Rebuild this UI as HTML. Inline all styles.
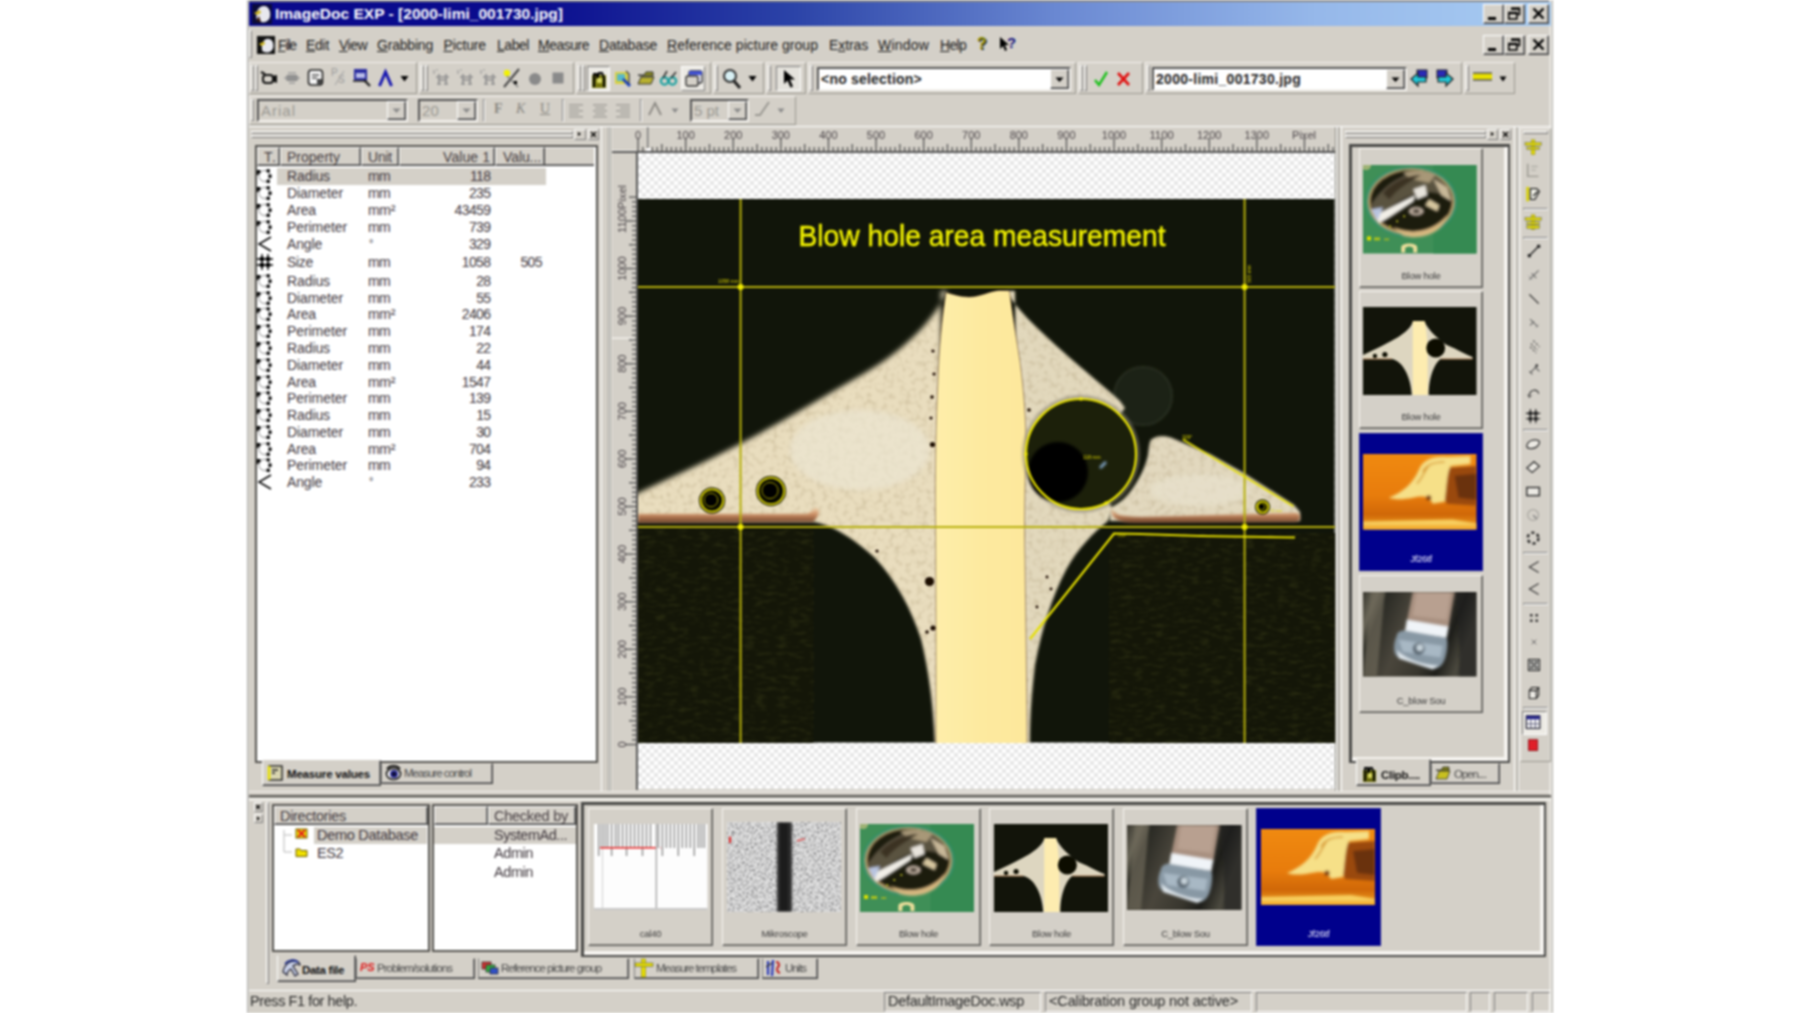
<!DOCTYPE html>
<html lang="en">
<head>
<meta charset="utf-8">
<title>ImageDoc EXP - [2000-limi_001730.jpg]</title>
<style>
*{box-sizing:border-box;margin:0;padding:0}
html,body{width:1800px;height:1013px;overflow:hidden;background:#fff}
body{font-family:"Liberation Sans","DejaVu Sans",sans-serif;font-size:13px;color:#000;position:relative}
.sunk{border:1px solid;border-color:#808080 #fff #fff #808080;box-shadow:inset 1px 1px 0 #404040,inset -1px -1px 0 #d4d0c8}
.sunk2{border:2px solid;border-color:#555 #f4f2ee #f4f2ee #555}
.lst{border:2px solid #55534f}
.rais{border:1px solid;border-color:#fff #404040 #404040 #fff;box-shadow:inset -1px -1px 0 #808080}
.rais1{border:1px solid;border-color:#fff #808080 #808080 #fff}
.sunk1{border:1px solid;border-color:#808080 #fff #fff #808080}
.hdr{background:#d4d0c8;border:1px solid;border-color:#fff #404040 #404040 #fff;box-shadow:inset -1px -1px 0 #808080}
svg{position:absolute;overflow:visible}
#w{position:absolute;left:0;top:0;width:1800px;height:1013px;overflow:hidden;filter:blur(0.8px)}

</style>
</head>
<body>
<div id="w">
<div style="position:absolute;left:247px;top:0px;width:1306px;height:1013px;background:#d4d0c8"></div>
<div style="position:absolute;left:247px;top:0px;width:1306px;height:2px;background:#8a8a8a"></div>
<div style="position:absolute;left:247px;top:0px;width:2px;height:1013px;background:linear-gradient(90deg,#9a9a9a,#e8e6e0)"></div>
<div style="position:absolute;left:1549px;top:0px;width:3px;height:1013px;background:#e4e2dc"></div>
<div style="position:absolute;left:1552px;top:0px;width:1px;height:1013px;background:#b4b2ac"></div>
<div style="position:absolute;left:249px;top:2px;width:1302px;height:24px;background:linear-gradient(90deg,#0a0a8c 0%,#0a0c8e 22%,#2c44a8 42%,#6a88d2 62%,#96b8ea 82%,#a8ccf2 100%)"></div>
<svg style="left:252px;top:4px" width="20" height="20" viewBox="0 0 20 20"><rect width="20" height="20" fill="#0b0b3a"/><path d="M5 16 C3 9 6 2 12 2 C17 2 19 8 18 13 C17 17 13 19 9 18 C7 15 6 13 5 16Z" fill="#e8e8ee"/><path d="M2 9 L8 6 L9 9 L5 11Z" fill="#d0b820"/><path d="M4 17 L7 12 L9 18Z" fill="#3a1a10"/></svg>
<div style="position:absolute;top:4px;font-size:15.5px;line-height:20px;white-space:nowrap;color:#fff;font-family:'Liberation Sans','DejaVu Sans',sans-serif;letter-spacing:0.015px;font-weight:bold;left:275px;">ImageDoc EXP - [2000-limi_001730.jpg]</div>
<div class="rais" style="position:absolute;left:1483px;top:4px;width:21px;height:20px;background:#d4d0c8"></div>
<div style="position:absolute;left:1488px;top:17px;width:8px;height:3px;background:#000"></div>
<div class="rais" style="position:absolute;left:1504px;top:4px;width:21px;height:20px;background:#d4d0c8"></div>
<svg style="left:1507px;top:7px" width="15" height="14" viewBox="0 0 15 14"><path d="M4.5 1.5h8v6h-2" fill="none" stroke="#000" stroke-width="1.6"/><path d="M4 1.7h9" stroke="#000" stroke-width="2.4"/><rect x="1.8" y="6" width="8" height="6" fill="none" stroke="#000" stroke-width="1.6"/><path d="M1 6h9.6" stroke="#000" stroke-width="2.4"/></svg>
<div class="rais" style="position:absolute;left:1528px;top:4px;width:21px;height:20px;background:#d4d0c8"></div>
<svg style="left:1532px;top:7px" width="13" height="13" viewBox="0 0 13 13"><path d="M1.5 1.5L11.5 11.5M11.5 1.5L1.5 11.5" stroke="#000" stroke-width="2.4"/></svg>
<div class="rais" style="position:absolute;left:1483px;top:35px;width:21px;height:20px;background:#d4d0c8"></div>
<div style="position:absolute;left:1488px;top:48px;width:8px;height:3px;background:#000"></div>
<div class="rais" style="position:absolute;left:1504px;top:35px;width:21px;height:20px;background:#d4d0c8"></div>
<svg style="left:1507px;top:38px" width="15" height="14" viewBox="0 0 15 14"><path d="M4.5 1.5h8v6h-2" fill="none" stroke="#000" stroke-width="1.6"/><path d="M4 1.7h9" stroke="#000" stroke-width="2.4"/><rect x="1.8" y="6" width="8" height="6" fill="none" stroke="#000" stroke-width="1.6"/><path d="M1 6h9.6" stroke="#000" stroke-width="2.4"/></svg>
<div class="rais" style="position:absolute;left:1528px;top:35px;width:21px;height:20px;background:#d4d0c8"></div>
<svg style="left:1532px;top:38px" width="13" height="13" viewBox="0 0 13 13"><path d="M1.5 1.5L11.5 11.5M11.5 1.5L1.5 11.5" stroke="#000" stroke-width="2.4"/></svg>
<div class="rais1" style="position:absolute;left:249px;top:30px;width:3px;height:28px;"></div>
<svg style="left:257px;top:36px" width="18" height="18" viewBox="0 0 20 20"><rect width="20" height="20" fill="#111"/><path d="M6 17 C4 10 7 3 12 3 C17 3 19 8 18 13 C17 17 13 19 9 18Z" fill="#e8e8ee"/><path d="M2 9 L8 6 L9 9 L5 11Z" fill="#d0b820"/></svg>
<div style="position:absolute;top:35px;font-size:14px;line-height:20px;white-space:nowrap;color:#1a1a1a;font-family:'Liberation Sans','DejaVu Sans',sans-serif;letter-spacing:-1.140px;left:278px;"><u>F</u>ile</div>
<div style="position:absolute;top:35px;font-size:14px;line-height:20px;white-space:nowrap;color:#1a1a1a;font-family:'Liberation Sans','DejaVu Sans',sans-serif;letter-spacing:-0.281px;left:306px;"><u>E</u>dit</div>
<div style="position:absolute;top:35px;font-size:14px;line-height:20px;white-space:nowrap;color:#1a1a1a;font-family:'Liberation Sans','DejaVu Sans',sans-serif;letter-spacing:-0.523px;left:339px;"><u>V</u>iew</div>
<div style="position:absolute;top:35px;font-size:14px;line-height:20px;white-space:nowrap;color:#1a1a1a;font-family:'Liberation Sans','DejaVu Sans',sans-serif;letter-spacing:-0.199px;left:377px;"><u>G</u>rabbing</div>
<div style="position:absolute;top:35px;font-size:14px;line-height:20px;white-space:nowrap;color:#1a1a1a;font-family:'Liberation Sans','DejaVu Sans',sans-serif;letter-spacing:-0.153px;left:443.5px;"><u>P</u>icture</div>
<div style="position:absolute;top:35px;font-size:14px;line-height:20px;white-space:nowrap;color:#1a1a1a;font-family:'Liberation Sans','DejaVu Sans',sans-serif;letter-spacing:-0.451px;left:497px;"><u>L</u>abel</div>
<div style="position:absolute;top:35px;font-size:14px;line-height:20px;white-space:nowrap;color:#1a1a1a;font-family:'Liberation Sans','DejaVu Sans',sans-serif;letter-spacing:-0.496px;left:538px;"><u>M</u>easure</div>
<div style="position:absolute;top:35px;font-size:14px;line-height:20px;white-space:nowrap;color:#1a1a1a;font-family:'Liberation Sans','DejaVu Sans',sans-serif;letter-spacing:-0.241px;left:599px;"><u>D</u>atabase</div>
<div style="position:absolute;top:35px;font-size:14px;line-height:20px;white-space:nowrap;color:#1a1a1a;font-family:'Liberation Sans','DejaVu Sans',sans-serif;letter-spacing:0.035px;left:667px;"><u>R</u>eference picture group</div>
<div style="position:absolute;top:35px;font-size:14px;line-height:20px;white-space:nowrap;color:#1a1a1a;font-family:'Liberation Sans','DejaVu Sans',sans-serif;letter-spacing:-0.112px;left:829px;">E<u>x</u>tras</div>
<div style="position:absolute;top:35px;font-size:14px;line-height:20px;white-space:nowrap;color:#1a1a1a;font-family:'Liberation Sans','DejaVu Sans',sans-serif;letter-spacing:0.201px;left:878px;"><u>W</u>indow</div>
<div style="position:absolute;top:35px;font-size:14px;line-height:20px;white-space:nowrap;color:#1a1a1a;font-family:'Liberation Sans','DejaVu Sans',sans-serif;letter-spacing:-0.698px;left:940px;"><u>H</u>elp</div>
<div style="position:absolute;top:34px;font-size:16px;line-height:20px;white-space:nowrap;color:#8a8a00;font-family:'Liberation Sans','DejaVu Sans',sans-serif;font-weight:bold;left:977px;text-shadow:1px 1px 0 #222;">?</div>
<svg style="left:999px;top:36px" width="18" height="18" viewBox="0 0 18 18"><path d="M1 1v12l3-3 2 5 2-1-2-5h4z" fill="#000"/></svg>
<div style="position:absolute;top:33px;font-size:15px;line-height:20px;white-space:nowrap;color:#10107a;font-family:'Liberation Sans','DejaVu Sans',sans-serif;font-weight:bold;left:1007px;">?</div>
<div style="position:absolute;left:249px;top:62px;width:168px;height:32px;border:1px solid;border-color:#f4f2ee #9a9890 #9a9890 #f4f2ee"></div>
<div class="rais1" style="position:absolute;left:251px;top:65px;width:3px;height:26px;"></div>
<div class="rais1" style="position:absolute;left:255px;top:65px;width:3px;height:26px;"></div>
<div style="position:absolute;left:419px;top:62px;width:155px;height:32px;border:1px solid;border-color:#f4f2ee #9a9890 #9a9890 #f4f2ee"></div>
<div class="rais1" style="position:absolute;left:421px;top:65px;width:3px;height:26px;"></div>
<div class="rais1" style="position:absolute;left:425px;top:65px;width:3px;height:26px;"></div>
<div style="position:absolute;left:576px;top:62px;width:135px;height:32px;border:1px solid;border-color:#f4f2ee #9a9890 #9a9890 #f4f2ee"></div>
<div class="rais1" style="position:absolute;left:578px;top:65px;width:3px;height:26px;"></div>
<div class="rais1" style="position:absolute;left:582px;top:65px;width:3px;height:26px;"></div>
<div style="position:absolute;left:713px;top:62px;width:51px;height:32px;border:1px solid;border-color:#f4f2ee #9a9890 #9a9890 #f4f2ee"></div>
<div class="rais1" style="position:absolute;left:715px;top:65px;width:3px;height:26px;"></div>
<div style="position:absolute;left:766px;top:62px;width:40px;height:32px;border:1px solid;border-color:#f4f2ee #9a9890 #9a9890 #f4f2ee"></div>
<div class="rais1" style="position:absolute;left:768px;top:65px;width:3px;height:26px;"></div>
<div style="position:absolute;left:808px;top:62px;width:268px;height:32px;border:1px solid;border-color:#f4f2ee #9a9890 #9a9890 #f4f2ee"></div>
<div class="rais1" style="position:absolute;left:810px;top:65px;width:3px;height:26px;"></div>
<div style="position:absolute;left:1078px;top:62px;width:65px;height:32px;border:1px solid;border-color:#f4f2ee #9a9890 #9a9890 #f4f2ee"></div>
<div class="rais1" style="position:absolute;left:1080px;top:65px;width:3px;height:26px;"></div>
<div class="rais1" style="position:absolute;left:1084px;top:65px;width:3px;height:26px;"></div>
<div style="position:absolute;left:1145px;top:62px;width:317px;height:32px;border:1px solid;border-color:#f4f2ee #9a9890 #9a9890 #f4f2ee"></div>
<div class="rais1" style="position:absolute;left:1147px;top:65px;width:3px;height:26px;"></div>
<div style="position:absolute;left:1464px;top:62px;width:51px;height:32px;border:1px solid;border-color:#f4f2ee #9a9890 #9a9890 #f4f2ee"></div>
<div class="rais1" style="position:absolute;left:1466px;top:65px;width:3px;height:26px;"></div>
<svg style="left:260px;top:69px" width="18" height="18" viewBox="0 0 18 18"><path d="M1 3l4 2" stroke="#111" stroke-width="2"/><rect x="3" y="6" width="10" height="8" rx="3" fill="none" stroke="#111" stroke-width="2"/><path d="M12 7l5-1v8l-5-2" fill="#111"/></svg>
<svg style="left:284px;top:71px" width="16" height="14" viewBox="0 0 16 14"><rect x="2" y="4" width="12" height="6" rx="2" fill="#8a8a8a"/><path d="M0 7h16M4 2h8M5 12h6" stroke="#9a9a9a" stroke-width="1.5"/></svg>
<svg style="left:307px;top:68px" width="18" height="20" viewBox="0 0 18 20"><rect x="1.5" y="2" width="14" height="15" rx="3" fill="#f4f4f4" stroke="#222" stroke-width="1.6"/><path d="M5 7h7M5 10h5" stroke="#555" stroke-width="1.4"/><rect x="10" y="11" width="5" height="5" fill="#444"/></svg>
<div style="position:absolute;top:67px;font-size:10px;line-height:12px;white-space:nowrap;color:#9a9a9a;font-family:'Liberation Sans','DejaVu Sans',sans-serif;left:331px;">P</div>
<div style="position:absolute;top:74px;font-size:10px;line-height:12px;white-space:nowrap;color:#9a9a9a;font-family:'Liberation Sans','DejaVu Sans',sans-serif;left:338px;">S</div>
<svg style="left:331px;top:68px" width="16" height="20" viewBox="0 0 16 20"><path d="M4 17L13 3" stroke="#a8a8a8" stroke-width="1.2"/></svg>
<svg style="left:352px;top:67px" width="20" height="22" viewBox="0 0 20 22"><rect x="2" y="2" width="13" height="11" fill="#2a2ca0"/><rect x="4" y="6" width="9" height="5" fill="#b8bce8"/><path d="M1 14h14" stroke="#444" stroke-width="2"/><path d="M12 13l6 6" stroke="#222" stroke-width="2.4"/></svg>
<svg style="left:378px;top:70px" width="16" height="18" viewBox="0 0 16 18"><path d="M1.5 16L7.5 2L13.5 16" fill="none" stroke="#1818b0" stroke-width="3"/></svg>
<svg style="left:400px;top:75px" width="9" height="8" viewBox="0 0 9 8"><path d="M0.5 1h8l-4 5.5z" fill="#000"/></svg>
<svg style="left:433px;top:68px" width="18" height="20" viewBox="0 0 18 20"><path d="M1 2v4M3 2h2" stroke="#9a9a9a" stroke-width="1.2"/><path d="M3 9h13M5 12h9M6 6v10M13 6v10M4 16h4M11 16h4" stroke="#8e8e8e" stroke-width="1.6" fill="none"/></svg>
<svg style="left:457px;top:68px" width="18" height="20" viewBox="0 0 18 20"><path d="M1 2v4M3 2h2" stroke="#9a9a9a" stroke-width="1.2"/><path d="M3 9h13M5 12h9M6 6v10M13 6v10M4 16h4M11 16h4" stroke="#8e8e8e" stroke-width="1.6" fill="none"/></svg>
<svg style="left:480px;top:68px" width="18" height="20" viewBox="0 0 18 20"><path d="M1 2v4M3 2h2" stroke="#9a9a9a" stroke-width="1.2"/><path d="M3 9h13M5 12h9M6 6v10M13 6v10M4 16h4M11 16h4" stroke="#8e8e8e" stroke-width="1.6" fill="none"/></svg>
<svg style="left:502px;top:68px" width="20" height="22" viewBox="0 0 20 22"><path d="M2 19L17 1" stroke="#444" stroke-width="2"/><path d="M3 6L16 19" stroke="#777" stroke-width="1.4"/><circle cx="5" cy="5" r="3.2" fill="#f2f200"/><rect x="12" y="13" width="3" height="3" fill="#000"/></svg>
<svg style="left:528px;top:72px" width="14" height="14" viewBox="0 0 14 14"><circle cx="7" cy="7" r="6" fill="#8a8a8a"/></svg>
<svg style="left:552px;top:72px" width="12" height="12" viewBox="0 0 12 12"><rect x="0.5" y="0.5" width="11" height="11" fill="#8a8a8a"/></svg>
<div style="position:absolute;left:587px;top:66px;width:23px;height:25px;background:#eceae4;border:1px solid;border-color:#808080 #fff #fff #808080"></div>
<svg style="left:591px;top:69px" width="16" height="20" viewBox="0 0 16 20"><rect x="1" y="6" width="14" height="13" fill="#7a7a10"/><path d="M3 18V5h3v5l2-6h3l2 5v9" fill="none" stroke="#000" stroke-width="2"/><rect x="6" y="9" width="5" height="5" fill="#d8d860"/></svg>
<svg style="left:614px;top:69px" width="18" height="20" viewBox="0 0 18 20"><rect x="1" y="3" width="13" height="12" fill="#d8d040"/><rect x="3" y="5" width="8" height="7" fill="#58b8c8"/><path d="M9 10l7 7" stroke="#1840c0" stroke-width="3"/><path d="M12 2l3 3v10" stroke="#444" stroke-width="1.4" fill="none"/></svg>
<svg style="left:637px;top:69px" width="18" height="18" viewBox="0 0 18 18"><path d="M1 6h6l2-3h7v4H4z" fill="#8a8a20" stroke="#333" stroke-width="1"/><path d="M1 15L4 8h13l-3 7z" fill="#b8b030" stroke="#333" stroke-width="1"/></svg>
<svg style="left:659px;top:69px" width="20" height="18" viewBox="0 0 20 18"><circle cx="5.5" cy="12" r="3.6" fill="none" stroke="#18a0a0" stroke-width="2.2"/><circle cx="13.5" cy="12" r="3.6" fill="none" stroke="#18a0a0" stroke-width="2.2"/><path d="M4 9L8 2M12 9L17 3" stroke="#333" stroke-width="1.6"/></svg>
<div style="position:absolute;left:681px;top:66px;width:24px;height:25px;background:#eceae4;border:1px solid;border-color:#fff #808080 #808080 #fff"></div>
<svg style="left:685px;top:69px" width="18" height="20" viewBox="0 0 18 20"><rect x="4" y="2" width="13" height="12" rx="2" fill="#e8e8f4" stroke="#333" stroke-width="1.4"/><rect x="4" y="2" width="13" height="4" fill="#4050d0"/><rect x="1" y="7" width="12" height="10" rx="2" fill="#d4d0c8" stroke="#333" stroke-width="1.4"/></svg>
<svg style="left:722px;top:68px" width="20" height="22" viewBox="0 0 20 22"><circle cx="8" cy="8" r="6" fill="#d8f0f4" stroke="#333" stroke-width="2"/><path d="M12 13l6 7" stroke="#222" stroke-width="3"/></svg>
<svg style="left:748px;top:75px" width="9" height="8" viewBox="0 0 9 8"><path d="M0.5 1h8l-4 5.5z" fill="#000"/></svg>
<div style="position:absolute;left:776px;top:66px;width:25px;height:25px;background:#e4e2dc;border:1px solid;border-color:#808080 #fff #fff #808080"></div>
<svg style="left:783px;top:70px" width="14" height="18" viewBox="0 0 14 18"><path d="M1 0v14l3.5-3.5 3 7 2.5-1-3-7h5z" fill="#000"/></svg>
<div class="sunk2" style="position:absolute;left:817px;top:67px;width:254px;height:24px;background:#fff"></div>
<div class="rais" style="position:absolute;left:1050px;top:69px;width:19px;height:20px;background:#d4d0c8"></div>
<svg style="left:1055px;top:77px" width="9" height="6" viewBox="0 0 9 6"><path d="M0.5 0.5h8l-4 4.5z" fill="#000"/></svg>
<div style="position:absolute;top:70px;font-size:14px;line-height:18px;white-space:nowrap;color:#222;font-family:'Liberation Sans','DejaVu Sans',sans-serif;letter-spacing:0.212px;font-weight:bold;left:821px;">&lt;no selection&gt;</div>
<svg style="left:1093px;top:70px" width="16" height="18" viewBox="0 0 16 18"><path d="M2 10l4 5L14 2" fill="none" stroke="#18c018" stroke-width="2.4"/></svg>
<svg style="left:1116px;top:71px" width="15" height="16" viewBox="0 0 15 16"><path d="M2 2l11 12M13 2L2 14" stroke="#e01010" stroke-width="2.6"/></svg>
<div class="sunk2" style="position:absolute;left:1152px;top:67px;width:255px;height:24px;background:#fff"></div>
<div class="rais" style="position:absolute;left:1386px;top:69px;width:19px;height:20px;background:#d4d0c8"></div>
<svg style="left:1391px;top:77px" width="9" height="6" viewBox="0 0 9 6"><path d="M0.5 0.5h8l-4 4.5z" fill="#000"/></svg>
<div style="position:absolute;top:70px;font-size:14px;line-height:18px;white-space:nowrap;color:#222;font-family:'Liberation Sans','DejaVu Sans',sans-serif;letter-spacing:0.285px;font-weight:bold;left:1156px;">2000-limi_001730.jpg</div>
<svg style="left:1410px;top:68px" width="20" height="20" viewBox="0 0 20 20"><g ><rect x="7" y="2" width="10" height="8" fill="#2a2ab8" stroke="#222" stroke-width="1"/><path d="M1 11l7-6v4h8v5H8v4z" fill="#20c8d8" stroke="#222" stroke-width="1.2"/></g></svg>
<svg style="left:1434px;top:68px" width="20" height="20" viewBox="0 0 20 20"><g transform="translate(20 0) scale(-1 1)"><rect x="7" y="2" width="10" height="8" fill="#2a2ab8" stroke="#222" stroke-width="1"/><path d="M1 11l7-6v4h8v5H8v4z" fill="#20c8d8" stroke="#222" stroke-width="1.2"/></g></svg>
<svg style="left:1473px;top:72px" width="19" height="10" viewBox="0 0 19 10"><rect x="0" y="1" width="19" height="7" fill="#e8e000"/><path d="M0 1h19M0 8h19" stroke="#555" stroke-width="1.4"/></svg>
<svg style="left:1499px;top:76px" width="8" height="7" viewBox="0 0 8 7"><path d="M0.5 0.5h7l-3.5 5z" fill="#000"/></svg>
<div style="position:absolute;left:249px;top:96px;width:547px;height:29px;border:1px solid;border-color:#f4f2ee #9a9890 #9a9890 #f4f2ee"></div>
<div class="rais1" style="position:absolute;left:251px;top:99px;width:3px;height:22px;"></div>
<div class="sunk2" style="position:absolute;left:257px;top:99px;width:151px;height:23px;background:#d4d0c8"></div>
<div class="rais" style="position:absolute;left:387px;top:101px;width:19px;height:19px;background:#d4d0c8"></div>
<svg style="left:392px;top:108px" width="9" height="6" viewBox="0 0 9 6"><path d="M0.5 0.5h8l-4 4.5z" fill="#8a8a8a"/></svg>
<div style="position:absolute;top:101.5px;font-size:15px;line-height:18px;white-space:nowrap;color:#9a9892;font-family:'Liberation Sans','DejaVu Sans',sans-serif;letter-spacing:0.998px;left:261px;">Arial</div>
<div class="sunk2" style="position:absolute;left:418px;top:99px;width:60px;height:23px;background:#d4d0c8"></div>
<div class="rais" style="position:absolute;left:457px;top:101px;width:19px;height:19px;background:#d4d0c8"></div>
<svg style="left:462px;top:108px" width="9" height="6" viewBox="0 0 9 6"><path d="M0.5 0.5h8l-4 4.5z" fill="#8a8a8a"/></svg>
<div style="position:absolute;top:101.5px;font-size:15px;line-height:18px;white-space:nowrap;color:#9a9892;font-family:'Liberation Sans','DejaVu Sans',sans-serif;letter-spacing:0.158px;left:422px;">20</div>
<div class="sunk1" style="position:absolute;left:483px;top:99px;width:2px;height:23px;"></div>
<div style="position:absolute;top:100px;font-size:14px;line-height:18px;white-space:nowrap;color:#8a8882;font-family:'Liberation Serif','DejaVu Serif',serif;font-weight:bold;left:494px;">F</div>
<div style="position:absolute;top:100px;font-size:14px;line-height:18px;white-space:nowrap;color:#8a8882;font-family:'Liberation Serif','DejaVu Serif',serif;font-style:italic;left:516px;">K</div>
<div style="position:absolute;top:100px;font-size:14px;line-height:18px;white-space:nowrap;color:#8a8882;font-family:'Liberation Serif','DejaVu Serif',serif;left:540px;text-decoration:underline;">U</div>
<div class="sunk1" style="position:absolute;left:562px;top:99px;width:2px;height:23px;"></div>
<svg style="left:569px;top:103px" width="14" height="16" viewBox="0 0 14 16"><rect x="0" y="1" width="14" height="1.6" fill="#a8a6a0"/><rect x="0" y="4" width="10" height="1.6" fill="#a8a6a0"/><rect x="0" y="7" width="14" height="1.6" fill="#a8a6a0"/><rect x="0" y="10" width="10" height="1.6" fill="#a8a6a0"/><rect x="0" y="13" width="14" height="1.6" fill="#a8a6a0"/></svg>
<svg style="left:593px;top:103px" width="14" height="16" viewBox="0 0 14 16"><rect x="0.0" y="1" width="14" height="1.6" fill="#a8a6a0"/><rect x="2.0" y="4" width="10" height="1.6" fill="#a8a6a0"/><rect x="0.0" y="7" width="14" height="1.6" fill="#a8a6a0"/><rect x="2.0" y="10" width="10" height="1.6" fill="#a8a6a0"/><rect x="0.0" y="13" width="14" height="1.6" fill="#a8a6a0"/></svg>
<svg style="left:616px;top:103px" width="14" height="16" viewBox="0 0 14 16"><rect x="0" y="1" width="14" height="1.6" fill="#a8a6a0"/><rect x="4" y="4" width="10" height="1.6" fill="#a8a6a0"/><rect x="0" y="7" width="14" height="1.6" fill="#a8a6a0"/><rect x="4" y="10" width="10" height="1.6" fill="#a8a6a0"/><rect x="0" y="13" width="14" height="1.6" fill="#a8a6a0"/></svg>
<div class="sunk1" style="position:absolute;left:640px;top:99px;width:2px;height:23px;"></div>
<svg style="left:648px;top:102px" width="14" height="14" viewBox="0 0 14 14"><path d="M1 13L7 1l6 12" fill="none" stroke="#8a8882" stroke-width="1.8"/></svg>
<svg style="left:671px;top:108px" width="8" height="6" viewBox="0 0 8 6"><path d="M0.5 0.5h7l-3.5 4.5z" fill="#8a8a8a"/></svg>
<div class="sunk2" style="position:absolute;left:690px;top:99px;width:59px;height:23px;background:#d4d0c8"></div>
<div class="rais" style="position:absolute;left:728px;top:101px;width:19px;height:19px;background:#d4d0c8"></div>
<svg style="left:733px;top:108px" width="9" height="6" viewBox="0 0 9 6"><path d="M0.5 0.5h8l-4 4.5z" fill="#8a8a8a"/></svg>
<div style="position:absolute;top:101.5px;font-size:15px;line-height:18px;white-space:nowrap;color:#9a9892;font-family:'Liberation Sans','DejaVu Sans',sans-serif;letter-spacing:-0.005px;left:694px;">5 pt</div>
<svg style="left:754px;top:101px" width="18" height="16" viewBox="0 0 18 16"><path d="M1 14h5L15 1" fill="none" stroke="#9a9892" stroke-width="2"/></svg>
<svg style="left:777px;top:108px" width="8" height="6" viewBox="0 0 8 6"><path d="M0.5 0.5h7l-3.5 4.5z" fill="#8a8a8a"/></svg>
<div style="position:absolute;left:249px;top:126px;width:1302px;height:1px;background:#fff"></div>
<div class="rais1" style="position:absolute;left:251px;top:131px;width:322px;height:3px;"></div>
<div class="rais1" style="position:absolute;left:251px;top:135px;width:322px;height:3px;"></div>
<div class="rais1" style="position:absolute;left:574px;top:129px;width:12px;height:11px;background:#d4d0c8"></div>
<svg style="left:577px;top:131px" width="6" height="6" viewBox="0 0 6 6"><path d="M1 1l3 2-3 2z" fill="#000"/></svg>
<div class="rais1" style="position:absolute;left:588px;top:129px;width:11px;height:11px;background:#d4d0c8"></div>
<svg style="left:590px;top:131px" width="7" height="7" viewBox="0 0 7 7"><path d="M1 1l5 5M6 1L1 6" stroke="#000" stroke-width="1.4"/></svg>
<div style="position:absolute;left:601px;top:127px;width:1px;height:664px;background:#fff"></div>
<div style="position:absolute;left:608px;top:127px;width:1px;height:664px;background:#9a9890"></div>
<div style="position:absolute;left:609px;top:127px;width:1px;height:664px;background:#fff"></div>
<div class="lst" style="position:absolute;left:255px;top:145px;width:342.5px;height:618px;background:#fff"></div>
<div style="position:absolute;left:257px;top:147px;width:337px;height:19px;background:#d4d0c8;border-bottom:1px solid #404040;box-shadow:inset 0 -1px 0 #808080,inset 0 1px 0 #fff"></div>
<div class="hdr" style="position:absolute;left:257px;top:147px;width:23px;height:19px;background:#d4d0c8"></div>
<div class="hdr" style="position:absolute;left:280px;top:147px;width:81px;height:19px;background:#d4d0c8"></div>
<div class="hdr" style="position:absolute;left:361px;top:147px;width:38px;height:19px;background:#d4d0c8"></div>
<div class="hdr" style="position:absolute;left:399px;top:147px;width:96px;height:19px;background:#d4d0c8"></div>
<div class="hdr" style="position:absolute;left:495px;top:147px;width:50px;height:19px;background:#d4d0c8"></div>
<div style="position:absolute;top:148px;font-size:14px;line-height:18px;white-space:nowrap;color:#443c40;font-family:'Liberation Sans','DejaVu Sans',sans-serif;letter-spacing:1.055px;left:264px;">T.</div>
<div style="position:absolute;top:148px;font-size:14px;line-height:18px;white-space:nowrap;color:#443c40;font-family:'Liberation Sans','DejaVu Sans',sans-serif;letter-spacing:0.011px;left:287px;">Property</div>
<div style="position:absolute;top:148px;font-size:14px;line-height:18px;white-space:nowrap;color:#443c40;font-family:'Liberation Sans','DejaVu Sans',sans-serif;letter-spacing:-0.224px;left:368px;">Unit</div>
<div style="position:absolute;top:148px;font-size:14px;line-height:18px;white-space:nowrap;color:#443c40;font-family:'Liberation Sans','DejaVu Sans',sans-serif;letter-spacing:0.080px;left:443px;">Value 1</div>
<div style="position:absolute;top:148px;font-size:14px;line-height:18px;white-space:nowrap;color:#443c40;font-family:'Liberation Sans','DejaVu Sans',sans-serif;letter-spacing:-0.093px;left:503px;">Valu...</div>
<div style="position:absolute;left:277px;top:168px;width:269px;height:17px;background:#d4d0c8"></div>
<svg style="left:257px;top:168px" width="16" height="16" viewBox="0 0 16 16"><circle cx="7.5" cy="8" r="5.6" fill="none" stroke="#a0a0a0" stroke-width="1.1"/><rect x="0" y="2" width="3.4" height="3.2"/><rect x="9.6" y="1.2" width="3.2" height="3.2"/><rect x="11.4" y="6.6" width="3.2" height="3.2"/><rect x="9.6" y="11.8" width="3.2" height="3.2"/><rect x="0" y="4" width="1.6" height="3"/></svg>
<div style="position:absolute;top:167px;font-size:14px;line-height:18px;white-space:nowrap;color:#3e363c;font-family:'Liberation Sans','DejaVu Sans',sans-serif;letter-spacing:-0.097px;left:287px;">Radius</div>
<div style="position:absolute;top:167px;font-size:14px;line-height:18px;white-space:nowrap;color:#3e363c;font-family:'Liberation Sans','DejaVu Sans',sans-serif;letter-spacing:-0.662px;left:368px;">mm</div>
<div style="position:absolute;top:167px;font-size:14px;line-height:18px;white-space:nowrap;color:#3e363c;font-family:'Liberation Sans','DejaVu Sans',sans-serif;right:1309.5px;text-align:right;letter-spacing:-0.6px;">118</div>
<svg style="left:257px;top:185px" width="16" height="16" viewBox="0 0 16 16"><circle cx="7.5" cy="8" r="5.6" fill="none" stroke="#a0a0a0" stroke-width="1.1"/><rect x="0" y="2" width="3.4" height="3.2"/><rect x="9.6" y="1.2" width="3.2" height="3.2"/><rect x="11.4" y="6.6" width="3.2" height="3.2"/><rect x="9.6" y="11.8" width="3.2" height="3.2"/><rect x="0" y="4" width="1.6" height="3"/></svg>
<div style="position:absolute;top:184px;font-size:14px;line-height:18px;white-space:nowrap;color:#3e363c;font-family:'Liberation Sans','DejaVu Sans',sans-serif;letter-spacing:-0.099px;left:287px;">Diameter</div>
<div style="position:absolute;top:184px;font-size:14px;line-height:18px;white-space:nowrap;color:#3e363c;font-family:'Liberation Sans','DejaVu Sans',sans-serif;letter-spacing:-0.662px;left:368px;">mm</div>
<div style="position:absolute;top:184px;font-size:14px;line-height:18px;white-space:nowrap;color:#3e363c;font-family:'Liberation Sans','DejaVu Sans',sans-serif;right:1309.5px;text-align:right;letter-spacing:-0.6px;">235</div>
<svg style="left:257px;top:202px" width="16" height="16" viewBox="0 0 16 16"><circle cx="7.5" cy="8" r="5.6" fill="none" stroke="#a0a0a0" stroke-width="1.1"/><rect x="0" y="2" width="3.4" height="3.2"/><rect x="9.6" y="1.2" width="3.2" height="3.2"/><rect x="11.4" y="6.6" width="3.2" height="3.2"/><rect x="9.6" y="11.8" width="3.2" height="3.2"/><rect x="0" y="4" width="1.6" height="3"/></svg>
<div style="position:absolute;top:201px;font-size:14px;line-height:18px;white-space:nowrap;color:#3e363c;font-family:'Liberation Sans','DejaVu Sans',sans-serif;letter-spacing:-0.143px;left:287px;">Area</div>
<div style="position:absolute;top:201px;font-size:14px;line-height:18px;white-space:nowrap;color:#3e363c;font-family:'Liberation Sans','DejaVu Sans',sans-serif;letter-spacing:-0.329px;left:368px;">mm²</div>
<div style="position:absolute;top:201px;font-size:14px;line-height:18px;white-space:nowrap;color:#3e363c;font-family:'Liberation Sans','DejaVu Sans',sans-serif;right:1309.5px;text-align:right;letter-spacing:-0.6px;">43459</div>
<svg style="left:257px;top:218.5px" width="16" height="16" viewBox="0 0 16 16"><circle cx="7.5" cy="8" r="5.6" fill="none" stroke="#a0a0a0" stroke-width="1.1"/><rect x="0" y="2" width="3.4" height="3.2"/><rect x="9.6" y="1.2" width="3.2" height="3.2"/><rect x="11.4" y="6.6" width="3.2" height="3.2"/><rect x="9.6" y="11.8" width="3.2" height="3.2"/><rect x="0" y="4" width="1.6" height="3"/></svg>
<div style="position:absolute;top:217.5px;font-size:14px;line-height:18px;white-space:nowrap;color:#3e363c;font-family:'Liberation Sans','DejaVu Sans',sans-serif;letter-spacing:-0.076px;left:287px;">Perimeter</div>
<div style="position:absolute;top:217.5px;font-size:14px;line-height:18px;white-space:nowrap;color:#3e363c;font-family:'Liberation Sans','DejaVu Sans',sans-serif;letter-spacing:-0.662px;left:368px;">mm</div>
<div style="position:absolute;top:217.5px;font-size:14px;line-height:18px;white-space:nowrap;color:#3e363c;font-family:'Liberation Sans','DejaVu Sans',sans-serif;right:1309.5px;text-align:right;letter-spacing:-0.6px;">739</div>
<svg style="left:257px;top:235.5px" width="16" height="16" viewBox="0 0 16 16"><path d="M14 1L2 8l12 7" fill="none" stroke="#000" stroke-width="1.5"/></svg>
<div style="position:absolute;top:234.5px;font-size:14px;line-height:18px;white-space:nowrap;color:#3e363c;font-family:'Liberation Sans','DejaVu Sans',sans-serif;letter-spacing:-0.161px;left:287px;">Angle</div>
<div style="position:absolute;top:233.5px;font-size:11px;line-height:18px;white-space:nowrap;color:#3e363c;font-family:'Liberation Sans','DejaVu Sans',sans-serif;left:369px;">°</div>
<div style="position:absolute;top:234.5px;font-size:14px;line-height:18px;white-space:nowrap;color:#3e363c;font-family:'Liberation Sans','DejaVu Sans',sans-serif;right:1309.5px;text-align:right;letter-spacing:-0.6px;">329</div>
<svg style="left:257px;top:253.5px" width="16" height="16" viewBox="0 0 16 16"><path d="M5 0v16M11 0v16M0 5h16M0 11h16" stroke="#000" stroke-width="1.4"/><rect x="3" y="3" width="4" height="4"/><rect x="9" y="3" width="4" height="4"/><rect x="3" y="9" width="4" height="4"/><rect x="9" y="9" width="4" height="4"/></svg>
<div style="position:absolute;top:252.5px;font-size:14px;line-height:18px;white-space:nowrap;color:#3e363c;font-family:'Liberation Sans','DejaVu Sans',sans-serif;letter-spacing:-0.309px;left:287px;">Size</div>
<div style="position:absolute;top:252.5px;font-size:14px;line-height:18px;white-space:nowrap;color:#3e363c;font-family:'Liberation Sans','DejaVu Sans',sans-serif;letter-spacing:-0.662px;left:368px;">mm</div>
<div style="position:absolute;top:252.5px;font-size:14px;line-height:18px;white-space:nowrap;color:#3e363c;font-family:'Liberation Sans','DejaVu Sans',sans-serif;right:1309.5px;text-align:right;letter-spacing:-0.6px;">1058</div>
<div style="position:absolute;top:252.5px;font-size:14px;line-height:18px;white-space:nowrap;color:#3e363c;font-family:'Liberation Sans','DejaVu Sans',sans-serif;right:1258px;text-align:right;letter-spacing:-0.6px;">505</div>
<svg style="left:257px;top:272.5px" width="16" height="16" viewBox="0 0 16 16"><circle cx="7.5" cy="8" r="5.6" fill="none" stroke="#a0a0a0" stroke-width="1.1"/><rect x="0" y="2" width="3.4" height="3.2"/><rect x="9.6" y="1.2" width="3.2" height="3.2"/><rect x="11.4" y="6.6" width="3.2" height="3.2"/><rect x="9.6" y="11.8" width="3.2" height="3.2"/><rect x="0" y="4" width="1.6" height="3"/></svg>
<div style="position:absolute;top:271.5px;font-size:14px;line-height:18px;white-space:nowrap;color:#3e363c;font-family:'Liberation Sans','DejaVu Sans',sans-serif;letter-spacing:-0.097px;left:287px;">Radius</div>
<div style="position:absolute;top:271.5px;font-size:14px;line-height:18px;white-space:nowrap;color:#3e363c;font-family:'Liberation Sans','DejaVu Sans',sans-serif;letter-spacing:-0.662px;left:368px;">mm</div>
<div style="position:absolute;top:271.5px;font-size:14px;line-height:18px;white-space:nowrap;color:#3e363c;font-family:'Liberation Sans','DejaVu Sans',sans-serif;right:1309.5px;text-align:right;letter-spacing:-0.6px;">28</div>
<svg style="left:257px;top:289.5px" width="16" height="16" viewBox="0 0 16 16"><circle cx="7.5" cy="8" r="5.6" fill="none" stroke="#a0a0a0" stroke-width="1.1"/><rect x="0" y="2" width="3.4" height="3.2"/><rect x="9.6" y="1.2" width="3.2" height="3.2"/><rect x="11.4" y="6.6" width="3.2" height="3.2"/><rect x="9.6" y="11.8" width="3.2" height="3.2"/><rect x="0" y="4" width="1.6" height="3"/></svg>
<div style="position:absolute;top:288.5px;font-size:14px;line-height:18px;white-space:nowrap;color:#3e363c;font-family:'Liberation Sans','DejaVu Sans',sans-serif;letter-spacing:-0.099px;left:287px;">Diameter</div>
<div style="position:absolute;top:288.5px;font-size:14px;line-height:18px;white-space:nowrap;color:#3e363c;font-family:'Liberation Sans','DejaVu Sans',sans-serif;letter-spacing:-0.662px;left:368px;">mm</div>
<div style="position:absolute;top:288.5px;font-size:14px;line-height:18px;white-space:nowrap;color:#3e363c;font-family:'Liberation Sans','DejaVu Sans',sans-serif;right:1309.5px;text-align:right;letter-spacing:-0.6px;">55</div>
<svg style="left:257px;top:306px" width="16" height="16" viewBox="0 0 16 16"><circle cx="7.5" cy="8" r="5.6" fill="none" stroke="#a0a0a0" stroke-width="1.1"/><rect x="0" y="2" width="3.4" height="3.2"/><rect x="9.6" y="1.2" width="3.2" height="3.2"/><rect x="11.4" y="6.6" width="3.2" height="3.2"/><rect x="9.6" y="11.8" width="3.2" height="3.2"/><rect x="0" y="4" width="1.6" height="3"/></svg>
<div style="position:absolute;top:305px;font-size:14px;line-height:18px;white-space:nowrap;color:#3e363c;font-family:'Liberation Sans','DejaVu Sans',sans-serif;letter-spacing:-0.143px;left:287px;">Area</div>
<div style="position:absolute;top:305px;font-size:14px;line-height:18px;white-space:nowrap;color:#3e363c;font-family:'Liberation Sans','DejaVu Sans',sans-serif;letter-spacing:-0.329px;left:368px;">mm²</div>
<div style="position:absolute;top:305px;font-size:14px;line-height:18px;white-space:nowrap;color:#3e363c;font-family:'Liberation Sans','DejaVu Sans',sans-serif;right:1309.5px;text-align:right;letter-spacing:-0.6px;">2406</div>
<svg style="left:257px;top:322.5px" width="16" height="16" viewBox="0 0 16 16"><circle cx="7.5" cy="8" r="5.6" fill="none" stroke="#a0a0a0" stroke-width="1.1"/><rect x="0" y="2" width="3.4" height="3.2"/><rect x="9.6" y="1.2" width="3.2" height="3.2"/><rect x="11.4" y="6.6" width="3.2" height="3.2"/><rect x="9.6" y="11.8" width="3.2" height="3.2"/><rect x="0" y="4" width="1.6" height="3"/></svg>
<div style="position:absolute;top:321.5px;font-size:14px;line-height:18px;white-space:nowrap;color:#3e363c;font-family:'Liberation Sans','DejaVu Sans',sans-serif;letter-spacing:-0.076px;left:287px;">Perimeter</div>
<div style="position:absolute;top:321.5px;font-size:14px;line-height:18px;white-space:nowrap;color:#3e363c;font-family:'Liberation Sans','DejaVu Sans',sans-serif;letter-spacing:-0.662px;left:368px;">mm</div>
<div style="position:absolute;top:321.5px;font-size:14px;line-height:18px;white-space:nowrap;color:#3e363c;font-family:'Liberation Sans','DejaVu Sans',sans-serif;right:1309.5px;text-align:right;letter-spacing:-0.6px;">174</div>
<svg style="left:257px;top:339.5px" width="16" height="16" viewBox="0 0 16 16"><circle cx="7.5" cy="8" r="5.6" fill="none" stroke="#a0a0a0" stroke-width="1.1"/><rect x="0" y="2" width="3.4" height="3.2"/><rect x="9.6" y="1.2" width="3.2" height="3.2"/><rect x="11.4" y="6.6" width="3.2" height="3.2"/><rect x="9.6" y="11.8" width="3.2" height="3.2"/><rect x="0" y="4" width="1.6" height="3"/></svg>
<div style="position:absolute;top:338.5px;font-size:14px;line-height:18px;white-space:nowrap;color:#3e363c;font-family:'Liberation Sans','DejaVu Sans',sans-serif;letter-spacing:-0.097px;left:287px;">Radius</div>
<div style="position:absolute;top:338.5px;font-size:14px;line-height:18px;white-space:nowrap;color:#3e363c;font-family:'Liberation Sans','DejaVu Sans',sans-serif;letter-spacing:-0.662px;left:368px;">mm</div>
<div style="position:absolute;top:338.5px;font-size:14px;line-height:18px;white-space:nowrap;color:#3e363c;font-family:'Liberation Sans','DejaVu Sans',sans-serif;right:1309.5px;text-align:right;letter-spacing:-0.6px;">22</div>
<svg style="left:257px;top:357px" width="16" height="16" viewBox="0 0 16 16"><circle cx="7.5" cy="8" r="5.6" fill="none" stroke="#a0a0a0" stroke-width="1.1"/><rect x="0" y="2" width="3.4" height="3.2"/><rect x="9.6" y="1.2" width="3.2" height="3.2"/><rect x="11.4" y="6.6" width="3.2" height="3.2"/><rect x="9.6" y="11.8" width="3.2" height="3.2"/><rect x="0" y="4" width="1.6" height="3"/></svg>
<div style="position:absolute;top:356px;font-size:14px;line-height:18px;white-space:nowrap;color:#3e363c;font-family:'Liberation Sans','DejaVu Sans',sans-serif;letter-spacing:-0.099px;left:287px;">Diameter</div>
<div style="position:absolute;top:356px;font-size:14px;line-height:18px;white-space:nowrap;color:#3e363c;font-family:'Liberation Sans','DejaVu Sans',sans-serif;letter-spacing:-0.662px;left:368px;">mm</div>
<div style="position:absolute;top:356px;font-size:14px;line-height:18px;white-space:nowrap;color:#3e363c;font-family:'Liberation Sans','DejaVu Sans',sans-serif;right:1309.5px;text-align:right;letter-spacing:-0.6px;">44</div>
<svg style="left:257px;top:373.5px" width="16" height="16" viewBox="0 0 16 16"><circle cx="7.5" cy="8" r="5.6" fill="none" stroke="#a0a0a0" stroke-width="1.1"/><rect x="0" y="2" width="3.4" height="3.2"/><rect x="9.6" y="1.2" width="3.2" height="3.2"/><rect x="11.4" y="6.6" width="3.2" height="3.2"/><rect x="9.6" y="11.8" width="3.2" height="3.2"/><rect x="0" y="4" width="1.6" height="3"/></svg>
<div style="position:absolute;top:372.5px;font-size:14px;line-height:18px;white-space:nowrap;color:#3e363c;font-family:'Liberation Sans','DejaVu Sans',sans-serif;letter-spacing:-0.143px;left:287px;">Area</div>
<div style="position:absolute;top:372.5px;font-size:14px;line-height:18px;white-space:nowrap;color:#3e363c;font-family:'Liberation Sans','DejaVu Sans',sans-serif;letter-spacing:-0.329px;left:368px;">mm²</div>
<div style="position:absolute;top:372.5px;font-size:14px;line-height:18px;white-space:nowrap;color:#3e363c;font-family:'Liberation Sans','DejaVu Sans',sans-serif;right:1309.5px;text-align:right;letter-spacing:-0.6px;">1547</div>
<svg style="left:257px;top:389.5px" width="16" height="16" viewBox="0 0 16 16"><circle cx="7.5" cy="8" r="5.6" fill="none" stroke="#a0a0a0" stroke-width="1.1"/><rect x="0" y="2" width="3.4" height="3.2"/><rect x="9.6" y="1.2" width="3.2" height="3.2"/><rect x="11.4" y="6.6" width="3.2" height="3.2"/><rect x="9.6" y="11.8" width="3.2" height="3.2"/><rect x="0" y="4" width="1.6" height="3"/></svg>
<div style="position:absolute;top:388.5px;font-size:14px;line-height:18px;white-space:nowrap;color:#3e363c;font-family:'Liberation Sans','DejaVu Sans',sans-serif;letter-spacing:-0.076px;left:287px;">Perimeter</div>
<div style="position:absolute;top:388.5px;font-size:14px;line-height:18px;white-space:nowrap;color:#3e363c;font-family:'Liberation Sans','DejaVu Sans',sans-serif;letter-spacing:-0.662px;left:368px;">mm</div>
<div style="position:absolute;top:388.5px;font-size:14px;line-height:18px;white-space:nowrap;color:#3e363c;font-family:'Liberation Sans','DejaVu Sans',sans-serif;right:1309.5px;text-align:right;letter-spacing:-0.6px;">139</div>
<svg style="left:257px;top:406.5px" width="16" height="16" viewBox="0 0 16 16"><circle cx="7.5" cy="8" r="5.6" fill="none" stroke="#a0a0a0" stroke-width="1.1"/><rect x="0" y="2" width="3.4" height="3.2"/><rect x="9.6" y="1.2" width="3.2" height="3.2"/><rect x="11.4" y="6.6" width="3.2" height="3.2"/><rect x="9.6" y="11.8" width="3.2" height="3.2"/><rect x="0" y="4" width="1.6" height="3"/></svg>
<div style="position:absolute;top:405.5px;font-size:14px;line-height:18px;white-space:nowrap;color:#3e363c;font-family:'Liberation Sans','DejaVu Sans',sans-serif;letter-spacing:-0.097px;left:287px;">Radius</div>
<div style="position:absolute;top:405.5px;font-size:14px;line-height:18px;white-space:nowrap;color:#3e363c;font-family:'Liberation Sans','DejaVu Sans',sans-serif;letter-spacing:-0.662px;left:368px;">mm</div>
<div style="position:absolute;top:405.5px;font-size:14px;line-height:18px;white-space:nowrap;color:#3e363c;font-family:'Liberation Sans','DejaVu Sans',sans-serif;right:1309.5px;text-align:right;letter-spacing:-0.6px;">15</div>
<svg style="left:257px;top:424px" width="16" height="16" viewBox="0 0 16 16"><circle cx="7.5" cy="8" r="5.6" fill="none" stroke="#a0a0a0" stroke-width="1.1"/><rect x="0" y="2" width="3.4" height="3.2"/><rect x="9.6" y="1.2" width="3.2" height="3.2"/><rect x="11.4" y="6.6" width="3.2" height="3.2"/><rect x="9.6" y="11.8" width="3.2" height="3.2"/><rect x="0" y="4" width="1.6" height="3"/></svg>
<div style="position:absolute;top:423px;font-size:14px;line-height:18px;white-space:nowrap;color:#3e363c;font-family:'Liberation Sans','DejaVu Sans',sans-serif;letter-spacing:-0.099px;left:287px;">Diameter</div>
<div style="position:absolute;top:423px;font-size:14px;line-height:18px;white-space:nowrap;color:#3e363c;font-family:'Liberation Sans','DejaVu Sans',sans-serif;letter-spacing:-0.662px;left:368px;">mm</div>
<div style="position:absolute;top:423px;font-size:14px;line-height:18px;white-space:nowrap;color:#3e363c;font-family:'Liberation Sans','DejaVu Sans',sans-serif;right:1309.5px;text-align:right;letter-spacing:-0.6px;">30</div>
<svg style="left:257px;top:440.5px" width="16" height="16" viewBox="0 0 16 16"><circle cx="7.5" cy="8" r="5.6" fill="none" stroke="#a0a0a0" stroke-width="1.1"/><rect x="0" y="2" width="3.4" height="3.2"/><rect x="9.6" y="1.2" width="3.2" height="3.2"/><rect x="11.4" y="6.6" width="3.2" height="3.2"/><rect x="9.6" y="11.8" width="3.2" height="3.2"/><rect x="0" y="4" width="1.6" height="3"/></svg>
<div style="position:absolute;top:439.5px;font-size:14px;line-height:18px;white-space:nowrap;color:#3e363c;font-family:'Liberation Sans','DejaVu Sans',sans-serif;letter-spacing:-0.143px;left:287px;">Area</div>
<div style="position:absolute;top:439.5px;font-size:14px;line-height:18px;white-space:nowrap;color:#3e363c;font-family:'Liberation Sans','DejaVu Sans',sans-serif;letter-spacing:-0.329px;left:368px;">mm²</div>
<div style="position:absolute;top:439.5px;font-size:14px;line-height:18px;white-space:nowrap;color:#3e363c;font-family:'Liberation Sans','DejaVu Sans',sans-serif;right:1309.5px;text-align:right;letter-spacing:-0.6px;">704</div>
<svg style="left:257px;top:457px" width="16" height="16" viewBox="0 0 16 16"><circle cx="7.5" cy="8" r="5.6" fill="none" stroke="#a0a0a0" stroke-width="1.1"/><rect x="0" y="2" width="3.4" height="3.2"/><rect x="9.6" y="1.2" width="3.2" height="3.2"/><rect x="11.4" y="6.6" width="3.2" height="3.2"/><rect x="9.6" y="11.8" width="3.2" height="3.2"/><rect x="0" y="4" width="1.6" height="3"/></svg>
<div style="position:absolute;top:456px;font-size:14px;line-height:18px;white-space:nowrap;color:#3e363c;font-family:'Liberation Sans','DejaVu Sans',sans-serif;letter-spacing:-0.076px;left:287px;">Perimeter</div>
<div style="position:absolute;top:456px;font-size:14px;line-height:18px;white-space:nowrap;color:#3e363c;font-family:'Liberation Sans','DejaVu Sans',sans-serif;letter-spacing:-0.662px;left:368px;">mm</div>
<div style="position:absolute;top:456px;font-size:14px;line-height:18px;white-space:nowrap;color:#3e363c;font-family:'Liberation Sans','DejaVu Sans',sans-serif;right:1309.5px;text-align:right;letter-spacing:-0.6px;">94</div>
<svg style="left:257px;top:474px" width="16" height="16" viewBox="0 0 16 16"><path d="M14 1L2 8l12 7" fill="none" stroke="#000" stroke-width="1.5"/></svg>
<div style="position:absolute;top:473px;font-size:14px;line-height:18px;white-space:nowrap;color:#3e363c;font-family:'Liberation Sans','DejaVu Sans',sans-serif;letter-spacing:-0.161px;left:287px;">Angle</div>
<div style="position:absolute;top:472px;font-size:11px;line-height:18px;white-space:nowrap;color:#3e363c;font-family:'Liberation Sans','DejaVu Sans',sans-serif;left:369px;">°</div>
<div style="position:absolute;top:473px;font-size:14px;line-height:18px;white-space:nowrap;color:#3e363c;font-family:'Liberation Sans','DejaVu Sans',sans-serif;right:1309.5px;text-align:right;letter-spacing:-0.6px;">233</div>
<div style="position:absolute;left:262px;top:760px;width:119px;height:26px;background:#d4d0c8;border:1px solid;border-color:#d4d0c8 #404040 #404040 #fff;box-shadow:inset -1px -1px 0 #808080"></div>
<svg style="left:268px;top:765px" width="16" height="17" viewBox="0 0 16 17"><rect x="1" y="1" width="13" height="14" fill="#d8d4b0" stroke="#222" stroke-width="1.4"/><path d="M1 1v14" stroke="#e8e000" stroke-width="2.5"/><path d="M4 5h6M4 8h3" stroke="#222" stroke-width="1.4"/></svg>
<div style="position:absolute;top:765px;font-size:11.5px;line-height:18px;white-space:nowrap;color:#111;font-family:'Liberation Sans','DejaVu Sans',sans-serif;letter-spacing:-0.190px;font-weight:bold;left:287px;">Measure values</div>
<div style="position:absolute;left:381px;top:763px;width:112px;height:21px;background:#d4d0c8;border:1px solid;border-color:#d4d0c8 #404040 #404040 #808080;box-shadow:inset -1px -1px 0 #808080"></div>
<svg style="left:385px;top:764px" width="17" height="18" viewBox="0 0 17 18"><path d="M2 5c3-4 10-4 13 0" fill="none" stroke="#111" stroke-width="2"/><ellipse cx="8.5" cy="10" rx="7" ry="5.5" fill="#fff" stroke="#111" stroke-width="1.6"/><circle cx="9" cy="10" r="4" fill="#28288a"/><circle cx="9" cy="10" r="1.6" fill="#000"/></svg>
<div style="position:absolute;top:765px;font-size:11.5px;line-height:16px;white-space:nowrap;color:#4a4a4a;font-family:'Liberation Sans','DejaVu Sans',sans-serif;letter-spacing:-1.030px;left:404px;">Measure control</div>
<div style="position:absolute;left:610px;top:127px;width:728px;height:26px;background:#d4d0c8"></div>
<div style="position:absolute;left:610px;top:127px;width:1px;height:664px;background:#8a8880"></div>
<div style="position:absolute;left:611px;top:127px;width:1px;height:664px;background:#f0eee8"></div>
<div style="position:absolute;left:638px;top:153px;width:697px;height:636px;background-color:#fff;background-image:linear-gradient(45deg,#e6e6e6 25%,transparent 25%,transparent 75%,#e6e6e6 75%),linear-gradient(45deg,#e6e6e6 25%,transparent 25%,transparent 75%,#e6e6e6 75%);background-size:8px 8px;background-position:0 0,4px 4px"></div>
<div style="position:absolute;left:612px;top:151px;width:725px;height:2px;background:#555"></div>
<div style="position:absolute;left:636px;top:151px;width:2px;height:639px;background:#555"></div>
<div style="position:absolute;left:612px;top:150px;width:24px;height:1px;background:#f4f2ee"></div>
<div style="position:absolute;left:1335px;top:127px;width:1px;height:664px;background:#8a8880"></div>
<div style="position:absolute;left:1336px;top:127px;width:2px;height:664px;background:#f4f2ee"></div>
<div style="position:absolute;left:1338px;top:127px;width:1px;height:664px;background:#8a8880"></div>
<div style="position:absolute;left:1341px;top:127px;width:1px;height:664px;background:#fff"></div>
<svg style="left:0;top:0" width="1800" height="1013" viewBox="0 0 1800 1013"><rect x="637.40" y="138" width="1.3" height="13" fill="#555"/><rect x="642.16" y="147" width="1.3" height="4" fill="#555"/><rect x="646.92" y="147" width="1.3" height="4" fill="#555"/><rect x="651.68" y="147" width="1.3" height="4" fill="#555"/><rect x="656.44" y="147" width="1.3" height="4" fill="#555"/><rect x="661.20" y="144" width="1.3" height="7" fill="#555"/><rect x="665.96" y="147" width="1.3" height="4" fill="#555"/><rect x="670.72" y="147" width="1.3" height="4" fill="#555"/><rect x="675.48" y="147" width="1.3" height="4" fill="#555"/><rect x="680.24" y="147" width="1.3" height="4" fill="#555"/><rect x="685.00" y="138" width="1.3" height="13" fill="#555"/><rect x="689.76" y="147" width="1.3" height="4" fill="#555"/><rect x="694.52" y="147" width="1.3" height="4" fill="#555"/><rect x="699.28" y="147" width="1.3" height="4" fill="#555"/><rect x="704.04" y="147" width="1.3" height="4" fill="#555"/><rect x="708.80" y="144" width="1.3" height="7" fill="#555"/><rect x="713.56" y="147" width="1.3" height="4" fill="#555"/><rect x="718.32" y="147" width="1.3" height="4" fill="#555"/><rect x="723.08" y="147" width="1.3" height="4" fill="#555"/><rect x="727.84" y="147" width="1.3" height="4" fill="#555"/><rect x="732.60" y="138" width="1.3" height="13" fill="#555"/><rect x="737.36" y="147" width="1.3" height="4" fill="#555"/><rect x="742.12" y="147" width="1.3" height="4" fill="#555"/><rect x="746.88" y="147" width="1.3" height="4" fill="#555"/><rect x="751.64" y="147" width="1.3" height="4" fill="#555"/><rect x="756.40" y="144" width="1.3" height="7" fill="#555"/><rect x="761.16" y="147" width="1.3" height="4" fill="#555"/><rect x="765.92" y="147" width="1.3" height="4" fill="#555"/><rect x="770.68" y="147" width="1.3" height="4" fill="#555"/><rect x="775.44" y="147" width="1.3" height="4" fill="#555"/><rect x="780.20" y="138" width="1.3" height="13" fill="#555"/><rect x="784.96" y="147" width="1.3" height="4" fill="#555"/><rect x="789.72" y="147" width="1.3" height="4" fill="#555"/><rect x="794.48" y="147" width="1.3" height="4" fill="#555"/><rect x="799.24" y="147" width="1.3" height="4" fill="#555"/><rect x="804.00" y="144" width="1.3" height="7" fill="#555"/><rect x="808.76" y="147" width="1.3" height="4" fill="#555"/><rect x="813.52" y="147" width="1.3" height="4" fill="#555"/><rect x="818.28" y="147" width="1.3" height="4" fill="#555"/><rect x="823.04" y="147" width="1.3" height="4" fill="#555"/><rect x="827.80" y="138" width="1.3" height="13" fill="#555"/><rect x="832.56" y="147" width="1.3" height="4" fill="#555"/><rect x="837.32" y="147" width="1.3" height="4" fill="#555"/><rect x="842.08" y="147" width="1.3" height="4" fill="#555"/><rect x="846.84" y="147" width="1.3" height="4" fill="#555"/><rect x="851.60" y="144" width="1.3" height="7" fill="#555"/><rect x="856.36" y="147" width="1.3" height="4" fill="#555"/><rect x="861.12" y="147" width="1.3" height="4" fill="#555"/><rect x="865.88" y="147" width="1.3" height="4" fill="#555"/><rect x="870.64" y="147" width="1.3" height="4" fill="#555"/><rect x="875.40" y="138" width="1.3" height="13" fill="#555"/><rect x="880.16" y="147" width="1.3" height="4" fill="#555"/><rect x="884.92" y="147" width="1.3" height="4" fill="#555"/><rect x="889.68" y="147" width="1.3" height="4" fill="#555"/><rect x="894.44" y="147" width="1.3" height="4" fill="#555"/><rect x="899.20" y="144" width="1.3" height="7" fill="#555"/><rect x="903.96" y="147" width="1.3" height="4" fill="#555"/><rect x="908.72" y="147" width="1.3" height="4" fill="#555"/><rect x="913.48" y="147" width="1.3" height="4" fill="#555"/><rect x="918.24" y="147" width="1.3" height="4" fill="#555"/><rect x="923.00" y="138" width="1.3" height="13" fill="#555"/><rect x="927.76" y="147" width="1.3" height="4" fill="#555"/><rect x="932.52" y="147" width="1.3" height="4" fill="#555"/><rect x="937.28" y="147" width="1.3" height="4" fill="#555"/><rect x="942.04" y="147" width="1.3" height="4" fill="#555"/><rect x="946.80" y="144" width="1.3" height="7" fill="#555"/><rect x="951.56" y="147" width="1.3" height="4" fill="#555"/><rect x="956.32" y="147" width="1.3" height="4" fill="#555"/><rect x="961.08" y="147" width="1.3" height="4" fill="#555"/><rect x="965.84" y="147" width="1.3" height="4" fill="#555"/><rect x="970.60" y="138" width="1.3" height="13" fill="#555"/><rect x="975.36" y="147" width="1.3" height="4" fill="#555"/><rect x="980.12" y="147" width="1.3" height="4" fill="#555"/><rect x="984.88" y="147" width="1.3" height="4" fill="#555"/><rect x="989.64" y="147" width="1.3" height="4" fill="#555"/><rect x="994.40" y="144" width="1.3" height="7" fill="#555"/><rect x="999.16" y="147" width="1.3" height="4" fill="#555"/><rect x="1003.92" y="147" width="1.3" height="4" fill="#555"/><rect x="1008.68" y="147" width="1.3" height="4" fill="#555"/><rect x="1013.44" y="147" width="1.3" height="4" fill="#555"/><rect x="1018.20" y="138" width="1.3" height="13" fill="#555"/><rect x="1022.96" y="147" width="1.3" height="4" fill="#555"/><rect x="1027.72" y="147" width="1.3" height="4" fill="#555"/><rect x="1032.48" y="147" width="1.3" height="4" fill="#555"/><rect x="1037.24" y="147" width="1.3" height="4" fill="#555"/><rect x="1042.00" y="144" width="1.3" height="7" fill="#555"/><rect x="1046.76" y="147" width="1.3" height="4" fill="#555"/><rect x="1051.52" y="147" width="1.3" height="4" fill="#555"/><rect x="1056.28" y="147" width="1.3" height="4" fill="#555"/><rect x="1061.04" y="147" width="1.3" height="4" fill="#555"/><rect x="1065.80" y="138" width="1.3" height="13" fill="#555"/><rect x="1070.56" y="147" width="1.3" height="4" fill="#555"/><rect x="1075.32" y="147" width="1.3" height="4" fill="#555"/><rect x="1080.08" y="147" width="1.3" height="4" fill="#555"/><rect x="1084.84" y="147" width="1.3" height="4" fill="#555"/><rect x="1089.60" y="144" width="1.3" height="7" fill="#555"/><rect x="1094.36" y="147" width="1.3" height="4" fill="#555"/><rect x="1099.12" y="147" width="1.3" height="4" fill="#555"/><rect x="1103.88" y="147" width="1.3" height="4" fill="#555"/><rect x="1108.64" y="147" width="1.3" height="4" fill="#555"/><rect x="1113.40" y="138" width="1.3" height="13" fill="#555"/><rect x="1118.16" y="147" width="1.3" height="4" fill="#555"/><rect x="1122.92" y="147" width="1.3" height="4" fill="#555"/><rect x="1127.68" y="147" width="1.3" height="4" fill="#555"/><rect x="1132.44" y="147" width="1.3" height="4" fill="#555"/><rect x="1137.20" y="144" width="1.3" height="7" fill="#555"/><rect x="1141.96" y="147" width="1.3" height="4" fill="#555"/><rect x="1146.72" y="147" width="1.3" height="4" fill="#555"/><rect x="1151.48" y="147" width="1.3" height="4" fill="#555"/><rect x="1156.24" y="147" width="1.3" height="4" fill="#555"/><rect x="1161.00" y="138" width="1.3" height="13" fill="#555"/><rect x="1165.76" y="147" width="1.3" height="4" fill="#555"/><rect x="1170.52" y="147" width="1.3" height="4" fill="#555"/><rect x="1175.28" y="147" width="1.3" height="4" fill="#555"/><rect x="1180.04" y="147" width="1.3" height="4" fill="#555"/><rect x="1184.80" y="144" width="1.3" height="7" fill="#555"/><rect x="1189.56" y="147" width="1.3" height="4" fill="#555"/><rect x="1194.32" y="147" width="1.3" height="4" fill="#555"/><rect x="1199.08" y="147" width="1.3" height="4" fill="#555"/><rect x="1203.84" y="147" width="1.3" height="4" fill="#555"/><rect x="1208.60" y="138" width="1.3" height="13" fill="#555"/><rect x="1213.36" y="147" width="1.3" height="4" fill="#555"/><rect x="1218.12" y="147" width="1.3" height="4" fill="#555"/><rect x="1222.88" y="147" width="1.3" height="4" fill="#555"/><rect x="1227.64" y="147" width="1.3" height="4" fill="#555"/><rect x="1232.40" y="144" width="1.3" height="7" fill="#555"/><rect x="1237.16" y="147" width="1.3" height="4" fill="#555"/><rect x="1241.92" y="147" width="1.3" height="4" fill="#555"/><rect x="1246.68" y="147" width="1.3" height="4" fill="#555"/><rect x="1251.44" y="147" width="1.3" height="4" fill="#555"/><rect x="1256.20" y="138" width="1.3" height="13" fill="#555"/><rect x="1260.96" y="147" width="1.3" height="4" fill="#555"/><rect x="1265.72" y="147" width="1.3" height="4" fill="#555"/><rect x="1270.48" y="147" width="1.3" height="4" fill="#555"/><rect x="1275.24" y="147" width="1.3" height="4" fill="#555"/><rect x="1280.00" y="144" width="1.3" height="7" fill="#555"/><rect x="1284.76" y="147" width="1.3" height="4" fill="#555"/><rect x="1289.52" y="147" width="1.3" height="4" fill="#555"/><rect x="1294.28" y="147" width="1.3" height="4" fill="#555"/><rect x="1299.04" y="147" width="1.3" height="4" fill="#555"/><rect x="1303.80" y="138" width="1.3" height="13" fill="#555"/><rect x="1308.56" y="147" width="1.3" height="4" fill="#555"/><rect x="1313.32" y="147" width="1.3" height="4" fill="#555"/><rect x="1318.08" y="147" width="1.3" height="4" fill="#555"/><rect x="1322.84" y="147" width="1.3" height="4" fill="#555"/><rect x="1327.60" y="144" width="1.3" height="7" fill="#555"/><rect x="1332.36" y="147" width="1.3" height="4" fill="#555"/><rect x="625" y="743.90" width="11" height="1.3" fill="#555"/><rect x="632" y="739.14" width="4" height="1.3" fill="#555"/><rect x="632" y="734.38" width="4" height="1.3" fill="#555"/><rect x="632" y="729.62" width="4" height="1.3" fill="#555"/><rect x="632" y="724.86" width="4" height="1.3" fill="#555"/><rect x="629" y="720.10" width="7" height="1.3" fill="#555"/><rect x="632" y="715.34" width="4" height="1.3" fill="#555"/><rect x="632" y="710.58" width="4" height="1.3" fill="#555"/><rect x="632" y="705.82" width="4" height="1.3" fill="#555"/><rect x="632" y="701.06" width="4" height="1.3" fill="#555"/><rect x="625" y="696.30" width="11" height="1.3" fill="#555"/><rect x="632" y="691.54" width="4" height="1.3" fill="#555"/><rect x="632" y="686.78" width="4" height="1.3" fill="#555"/><rect x="632" y="682.02" width="4" height="1.3" fill="#555"/><rect x="632" y="677.26" width="4" height="1.3" fill="#555"/><rect x="629" y="672.50" width="7" height="1.3" fill="#555"/><rect x="632" y="667.74" width="4" height="1.3" fill="#555"/><rect x="632" y="662.98" width="4" height="1.3" fill="#555"/><rect x="632" y="658.22" width="4" height="1.3" fill="#555"/><rect x="632" y="653.46" width="4" height="1.3" fill="#555"/><rect x="625" y="648.70" width="11" height="1.3" fill="#555"/><rect x="632" y="643.94" width="4" height="1.3" fill="#555"/><rect x="632" y="639.18" width="4" height="1.3" fill="#555"/><rect x="632" y="634.42" width="4" height="1.3" fill="#555"/><rect x="632" y="629.66" width="4" height="1.3" fill="#555"/><rect x="629" y="624.90" width="7" height="1.3" fill="#555"/><rect x="632" y="620.14" width="4" height="1.3" fill="#555"/><rect x="632" y="615.38" width="4" height="1.3" fill="#555"/><rect x="632" y="610.62" width="4" height="1.3" fill="#555"/><rect x="632" y="605.86" width="4" height="1.3" fill="#555"/><rect x="625" y="601.10" width="11" height="1.3" fill="#555"/><rect x="632" y="596.34" width="4" height="1.3" fill="#555"/><rect x="632" y="591.58" width="4" height="1.3" fill="#555"/><rect x="632" y="586.82" width="4" height="1.3" fill="#555"/><rect x="632" y="582.06" width="4" height="1.3" fill="#555"/><rect x="629" y="577.30" width="7" height="1.3" fill="#555"/><rect x="632" y="572.54" width="4" height="1.3" fill="#555"/><rect x="632" y="567.78" width="4" height="1.3" fill="#555"/><rect x="632" y="563.02" width="4" height="1.3" fill="#555"/><rect x="632" y="558.26" width="4" height="1.3" fill="#555"/><rect x="625" y="553.50" width="11" height="1.3" fill="#555"/><rect x="632" y="548.74" width="4" height="1.3" fill="#555"/><rect x="632" y="543.98" width="4" height="1.3" fill="#555"/><rect x="632" y="539.22" width="4" height="1.3" fill="#555"/><rect x="632" y="534.46" width="4" height="1.3" fill="#555"/><rect x="629" y="529.70" width="7" height="1.3" fill="#555"/><rect x="632" y="524.94" width="4" height="1.3" fill="#555"/><rect x="632" y="520.18" width="4" height="1.3" fill="#555"/><rect x="632" y="515.42" width="4" height="1.3" fill="#555"/><rect x="632" y="510.66" width="4" height="1.3" fill="#555"/><rect x="625" y="505.90" width="11" height="1.3" fill="#555"/><rect x="632" y="501.14" width="4" height="1.3" fill="#555"/><rect x="632" y="496.38" width="4" height="1.3" fill="#555"/><rect x="632" y="491.62" width="4" height="1.3" fill="#555"/><rect x="632" y="486.86" width="4" height="1.3" fill="#555"/><rect x="629" y="482.10" width="7" height="1.3" fill="#555"/><rect x="632" y="477.34" width="4" height="1.3" fill="#555"/><rect x="632" y="472.58" width="4" height="1.3" fill="#555"/><rect x="632" y="467.82" width="4" height="1.3" fill="#555"/><rect x="632" y="463.06" width="4" height="1.3" fill="#555"/><rect x="625" y="458.30" width="11" height="1.3" fill="#555"/><rect x="632" y="453.54" width="4" height="1.3" fill="#555"/><rect x="632" y="448.78" width="4" height="1.3" fill="#555"/><rect x="632" y="444.02" width="4" height="1.3" fill="#555"/><rect x="632" y="439.26" width="4" height="1.3" fill="#555"/><rect x="629" y="434.50" width="7" height="1.3" fill="#555"/><rect x="632" y="429.74" width="4" height="1.3" fill="#555"/><rect x="632" y="424.98" width="4" height="1.3" fill="#555"/><rect x="632" y="420.22" width="4" height="1.3" fill="#555"/><rect x="632" y="415.46" width="4" height="1.3" fill="#555"/><rect x="625" y="410.70" width="11" height="1.3" fill="#555"/><rect x="632" y="405.94" width="4" height="1.3" fill="#555"/><rect x="632" y="401.18" width="4" height="1.3" fill="#555"/><rect x="632" y="396.42" width="4" height="1.3" fill="#555"/><rect x="632" y="391.66" width="4" height="1.3" fill="#555"/><rect x="629" y="386.90" width="7" height="1.3" fill="#555"/><rect x="632" y="382.14" width="4" height="1.3" fill="#555"/><rect x="632" y="377.38" width="4" height="1.3" fill="#555"/><rect x="632" y="372.62" width="4" height="1.3" fill="#555"/><rect x="632" y="367.86" width="4" height="1.3" fill="#555"/><rect x="625" y="363.10" width="11" height="1.3" fill="#555"/><rect x="632" y="358.34" width="4" height="1.3" fill="#555"/><rect x="632" y="353.58" width="4" height="1.3" fill="#555"/><rect x="632" y="348.82" width="4" height="1.3" fill="#555"/><rect x="632" y="344.06" width="4" height="1.3" fill="#555"/><rect x="629" y="339.30" width="7" height="1.3" fill="#555"/><rect x="632" y="334.54" width="4" height="1.3" fill="#555"/><rect x="632" y="329.78" width="4" height="1.3" fill="#555"/><rect x="632" y="325.02" width="4" height="1.3" fill="#555"/><rect x="632" y="320.26" width="4" height="1.3" fill="#555"/><rect x="625" y="315.50" width="11" height="1.3" fill="#555"/><rect x="632" y="310.74" width="4" height="1.3" fill="#555"/><rect x="632" y="305.98" width="4" height="1.3" fill="#555"/><rect x="632" y="301.22" width="4" height="1.3" fill="#555"/><rect x="632" y="296.46" width="4" height="1.3" fill="#555"/><rect x="629" y="291.70" width="7" height="1.3" fill="#555"/><rect x="632" y="286.94" width="4" height="1.3" fill="#555"/><rect x="632" y="282.18" width="4" height="1.3" fill="#555"/><rect x="632" y="277.42" width="4" height="1.3" fill="#555"/><rect x="632" y="272.66" width="4" height="1.3" fill="#555"/><rect x="625" y="267.90" width="11" height="1.3" fill="#555"/><rect x="632" y="263.14" width="4" height="1.3" fill="#555"/><rect x="632" y="258.38" width="4" height="1.3" fill="#555"/><rect x="632" y="253.62" width="4" height="1.3" fill="#555"/><rect x="632" y="248.86" width="4" height="1.3" fill="#555"/><rect x="629" y="244.10" width="7" height="1.3" fill="#555"/><rect x="632" y="239.34" width="4" height="1.3" fill="#555"/><rect x="632" y="234.58" width="4" height="1.3" fill="#555"/><rect x="632" y="229.82" width="4" height="1.3" fill="#555"/><rect x="632" y="225.06" width="4" height="1.3" fill="#555"/><rect x="625" y="220.30" width="11" height="1.3" fill="#555"/><rect x="632" y="215.54" width="4" height="1.3" fill="#555"/><rect x="632" y="210.78" width="4" height="1.3" fill="#555"/><rect x="632" y="206.02" width="4" height="1.3" fill="#555"/><rect x="632" y="201.26" width="4" height="1.3" fill="#555"/><rect x="629" y="196.50" width="7" height="1.3" fill="#555"/><rect x="647" y="127" width="1.4" height="20" fill="#777"/><rect x="646" y="148" width="5" height="3" fill="#fff"/><rect x="612" y="337.5" width="22" height="1.4" fill="#f4f2ee"/><text x="638.0" y="138.5" text-anchor="middle" font-family="Liberation Sans, DejaVu Sans, sans-serif" font-size="11" fill="#4a4448" textLength="6.1" lengthAdjust="spacingAndGlyphs">0</text><text x="685.6" y="138.5" text-anchor="middle" font-family="Liberation Sans, DejaVu Sans, sans-serif" font-size="11" fill="#4a4448" textLength="18.3" lengthAdjust="spacingAndGlyphs">100</text><text x="733.2" y="138.5" text-anchor="middle" font-family="Liberation Sans, DejaVu Sans, sans-serif" font-size="11" fill="#4a4448" textLength="18.3" lengthAdjust="spacingAndGlyphs">200</text><text x="780.8" y="138.5" text-anchor="middle" font-family="Liberation Sans, DejaVu Sans, sans-serif" font-size="11" fill="#4a4448" textLength="18.3" lengthAdjust="spacingAndGlyphs">300</text><text x="828.4" y="138.5" text-anchor="middle" font-family="Liberation Sans, DejaVu Sans, sans-serif" font-size="11" fill="#4a4448" textLength="18.3" lengthAdjust="spacingAndGlyphs">400</text><text x="876.0" y="138.5" text-anchor="middle" font-family="Liberation Sans, DejaVu Sans, sans-serif" font-size="11" fill="#4a4448" textLength="18.3" lengthAdjust="spacingAndGlyphs">500</text><text x="923.6" y="138.5" text-anchor="middle" font-family="Liberation Sans, DejaVu Sans, sans-serif" font-size="11" fill="#4a4448" textLength="18.3" lengthAdjust="spacingAndGlyphs">600</text><text x="971.2" y="138.5" text-anchor="middle" font-family="Liberation Sans, DejaVu Sans, sans-serif" font-size="11" fill="#4a4448" textLength="18.3" lengthAdjust="spacingAndGlyphs">700</text><text x="1018.8" y="138.5" text-anchor="middle" font-family="Liberation Sans, DejaVu Sans, sans-serif" font-size="11" fill="#4a4448" textLength="18.3" lengthAdjust="spacingAndGlyphs">800</text><text x="1066.4" y="138.5" text-anchor="middle" font-family="Liberation Sans, DejaVu Sans, sans-serif" font-size="11" fill="#4a4448" textLength="18.3" lengthAdjust="spacingAndGlyphs">900</text><text x="1114.0" y="138.5" text-anchor="middle" font-family="Liberation Sans, DejaVu Sans, sans-serif" font-size="11" fill="#4a4448" textLength="24.4" lengthAdjust="spacingAndGlyphs">1000</text><text x="1161.6" y="138.5" text-anchor="middle" font-family="Liberation Sans, DejaVu Sans, sans-serif" font-size="11" fill="#4a4448" textLength="24.4" lengthAdjust="spacingAndGlyphs">1100</text><text x="1209.2" y="138.5" text-anchor="middle" font-family="Liberation Sans, DejaVu Sans, sans-serif" font-size="11" fill="#4a4448" textLength="24.4" lengthAdjust="spacingAndGlyphs">1200</text><text x="1256.8" y="138.5" text-anchor="middle" font-family="Liberation Sans, DejaVu Sans, sans-serif" font-size="11" fill="#4a4448" textLength="24.4" lengthAdjust="spacingAndGlyphs">1300</text><text x="1304" y="138.5" text-anchor="middle" font-family="Liberation Sans, DejaVu Sans, sans-serif" font-size="11" fill="#4a4448" textLength="24" lengthAdjust="spacingAndGlyphs">Pixel</text><text transform="translate(625.5 744.5) rotate(-90)" text-anchor="middle" font-family="Liberation Sans, DejaVu Sans, sans-serif" font-size="11" fill="#4a4448" textLength="6.1" lengthAdjust="spacingAndGlyphs">0</text><text transform="translate(625.5 696.9) rotate(-90)" text-anchor="middle" font-family="Liberation Sans, DejaVu Sans, sans-serif" font-size="11" fill="#4a4448" textLength="18.3" lengthAdjust="spacingAndGlyphs">100</text><text transform="translate(625.5 649.3) rotate(-90)" text-anchor="middle" font-family="Liberation Sans, DejaVu Sans, sans-serif" font-size="11" fill="#4a4448" textLength="18.3" lengthAdjust="spacingAndGlyphs">200</text><text transform="translate(625.5 601.7) rotate(-90)" text-anchor="middle" font-family="Liberation Sans, DejaVu Sans, sans-serif" font-size="11" fill="#4a4448" textLength="18.3" lengthAdjust="spacingAndGlyphs">300</text><text transform="translate(625.5 554.1) rotate(-90)" text-anchor="middle" font-family="Liberation Sans, DejaVu Sans, sans-serif" font-size="11" fill="#4a4448" textLength="18.3" lengthAdjust="spacingAndGlyphs">400</text><text transform="translate(625.5 506.5) rotate(-90)" text-anchor="middle" font-family="Liberation Sans, DejaVu Sans, sans-serif" font-size="11" fill="#4a4448" textLength="18.3" lengthAdjust="spacingAndGlyphs">500</text><text transform="translate(625.5 458.9) rotate(-90)" text-anchor="middle" font-family="Liberation Sans, DejaVu Sans, sans-serif" font-size="11" fill="#4a4448" textLength="18.3" lengthAdjust="spacingAndGlyphs">600</text><text transform="translate(625.5 411.3) rotate(-90)" text-anchor="middle" font-family="Liberation Sans, DejaVu Sans, sans-serif" font-size="11" fill="#4a4448" textLength="18.3" lengthAdjust="spacingAndGlyphs">700</text><text transform="translate(625.5 363.7) rotate(-90)" text-anchor="middle" font-family="Liberation Sans, DejaVu Sans, sans-serif" font-size="11" fill="#4a4448" textLength="18.3" lengthAdjust="spacingAndGlyphs">800</text><text transform="translate(625.5 316.1) rotate(-90)" text-anchor="middle" font-family="Liberation Sans, DejaVu Sans, sans-serif" font-size="11" fill="#4a4448" textLength="18.3" lengthAdjust="spacingAndGlyphs">900</text><text transform="translate(625.5 268.5) rotate(-90)" text-anchor="middle" font-family="Liberation Sans, DejaVu Sans, sans-serif" font-size="11" fill="#4a4448" textLength="24.4" lengthAdjust="spacingAndGlyphs">1000</text><text transform="translate(625.5 220.9) rotate(-90)" text-anchor="middle" font-family="Liberation Sans, DejaVu Sans, sans-serif" font-size="11" fill="#4a4448" textLength="24.4" lengthAdjust="spacingAndGlyphs">1100</text><text transform="translate(625.5 197) rotate(-90)" text-anchor="middle" font-family="Liberation Sans, DejaVu Sans, sans-serif" font-size="11" fill="#4a4448" textLength="24" lengthAdjust="spacingAndGlyphs">Pixel</text></svg>
<svg style="left:638px;top:199px;overflow:hidden" width="696.5" height="543.5" viewBox="638 199 696.5 543.5"><defs>
<filter id="b4" x="-20%" y="-20%" width="140%" height="140%"><feGaussianBlur stdDeviation="2.6"/></filter>
<filter id="b2" x="-20%" y="-20%" width="140%" height="140%"><feGaussianBlur stdDeviation="1.3"/></filter>
<filter id="b1" x="-20%" y="-20%" width="140%" height="140%"><feGaussianBlur stdDeviation="0.8"/></filter>
<filter id="by" x="-5%" y="-5%" width="110%" height="110%"><feGaussianBlur stdDeviation="0.5"/></filter>
<filter id="tex" color-interpolation-filters="sRGB" x="0" y="0" width="100%" height="100%"><feTurbulence type="fractalNoise" baseFrequency="0.09 0.25" numOctaves="2" seed="4" result="n"/><feColorMatrix in="n" type="matrix" values="0 0 0 0 0.15  0 0 0 0 0.16  0 0 0 0 0.06  0 0 0 2.6 -1.25"/></filter>
<filter id="grain" color-interpolation-filters="sRGB" x="0" y="0" width="100%" height="100%"><feTurbulence type="fractalNoise" baseFrequency="0.18" numOctaves="2" seed="9" result="n"/><feColorMatrix in="n" type="matrix" values="0 0 0 0 0.62  0 0 0 0 0.55  0 0 0 0 0.40  0 0 0 -1.8 0.95"/><feComposite in2="SourceGraphic" operator="in"/></filter>
<linearGradient id="barg" x1="0" x2="1" y1="0" y2="0"><stop offset="0" stop-color="#feeeaa"/><stop offset="0.5" stop-color="#fdea9f"/><stop offset="1" stop-color="#fde89c"/></linearGradient>
<linearGradient id="cu" x1="0" x2="0" y1="0" y2="1"><stop offset="0" stop-color="#f0d0a8"/><stop offset="0.45" stop-color="#c88a60"/><stop offset="1" stop-color="#6a4028"/></linearGradient>
<radialGradient id="hole" cx="0.5" cy="0.5" r="0.5"><stop offset="0" stop-color="#1c2008"/><stop offset="1" stop-color="#20240c"/></radialGradient>
</defs><rect x="638" y="199" width="696.5" height="543.5" fill="#11150a"/><rect x="638" y="529" width="175.5" height="214" fill="#141608"/><rect x="638" y="529" width="175.5" height="214" filter="url(#tex)"/><rect x="1109" y="533" width="226" height="210" fill="#141608"/><rect x="1109" y="533" width="226" height="210" filter="url(#tex)"/><circle cx="1143" cy="396" r="29" fill="#1c2214" stroke="#2a3024" stroke-width="2" filter="url(#b2)"/><clipPath id="cpU"><rect x="600" y="199" width="360" height="306"/></clipPath><clipPath id="cpL"><rect x="600" y="505" width="360" height="240"/></clipPath><g clip-path="url(#cpU)"><path d="M947 291 C936 318 905 350 865 373 C823 397 782 422 740 444 C700 465 665 480 630 497 L630 522 L813 522 C832 524 858 542 875 558 C896 580 912 611 921 639 C928 668 933 700 935 745 L941 745 L941 291 Z" fill="#e9ddbe" filter="url(#b4)"/></g><g clip-path="url(#cpL)"><path d="M947 291 C936 318 905 350 865 373 C823 397 782 422 740 444 C700 465 665 480 630 497 L630 522 L813 522 C832 524 858 542 875 558 C896 580 912 611 921 639 C928 668 933 700 935 745 L941 745 L941 291 Z" fill="#e9ddbe" filter="url(#b1)"/></g><path d="M1006 291 C1014 305 1030 322 1049 339 C1076 364 1104 386 1120 401 L1125 408 L1100 440 L1090 450 L1112 509 L1108 521 C1094 532 1078 548 1066 570 C1052 597 1042 628 1035 665 C1031 700 1030 720 1030 745 L1020 745 L1015 291 Z" fill="#e2d8bc" filter="url(#b2)"/><path d="M1150 442 C1152 436 1164 434.5 1172 438 L1210.5 454.5 L1242 472 L1294 505 L1300 512 L1300 521 L1110 521 L1109.5 508 C1118 504 1124 500 1130 492 C1138 482 1146 466 1148 455 C1149 448 1149 442 1152 438Z" fill="#e2d8be" filter="url(#b1)"/><g opacity="0.4"><path d="M947 291 C936 318 905 350 865 373 C823 397 782 422 740 444 C700 465 665 480 630 497 L630 522 L813 522 C832 524 858 542 875 558 C896 580 912 611 921 639 C928 668 933 700 935 745 L941 745 L941 291 Z" fill="#fff" filter="url(#grain)"/><path d="M1006 291 C1014 305 1030 322 1049 339 C1076 364 1104 386 1120 401 L1125 408 L1100 440 L1090 450 L1112 509 L1108 521 C1094 532 1078 548 1066 570 C1052 597 1042 628 1035 665 C1031 700 1030 720 1030 745 L1020 745 L1015 291 Z" fill="#fff" filter="url(#grain)"/><path d="M1150 442 C1152 436 1164 434.5 1172 438 L1210.5 454.5 L1242 472 L1294 505 L1300 512 L1300 521 L1110 521 L1109.5 508 C1118 504 1124 500 1130 492 C1138 482 1146 466 1148 455 C1149 448 1149 442 1152 438Z" fill="#fff" filter="url(#grain)"/></g><ellipse cx="860" cy="450" rx="70" ry="40" fill="#ebe5d2" opacity="0.7" filter="url(#b4)"/><ellipse cx="1200" cy="490" rx="50" ry="16" fill="#e8e2ce" opacity="0.7" filter="url(#b4)"/><path d="M638 514 L806 514 C812 513 813 508 816 508 C821 509 819 517 813 522 L638 523Z" fill="url(#cu)" filter="url(#b1)"/><path d="M1112 508 C1114 516 1122 516 1140 517 L1296 513 C1302 514 1301 521 1296 522 L1135 523 C1118 523 1110 518 1112 508Z" fill="url(#cu)" filter="url(#b1)"/><path d="M945.5 292.5 C952 294 960 297 969 297 C980 297 990 291 999 290.5 C1003 290.5 1007 290.5 1009.5 291 C1012 312 1016 336 1020 362 C1024 392 1026 420 1026 450 C1025 480 1024 520 1025 560 C1026 640 1027 700 1027 745 L936 745 C936 680 936 600 935.5 520 C935 470 936 420 938 380 C939 350 942 318 946 293Z" fill="url(#barg)" stroke="#5a3a2a" stroke-opacity="0.5" stroke-width="1" filter="url(#by)"/><circle cx="1081" cy="454" r="59" fill="#8a8474" opacity="0.55" filter="url(#b2)"/><circle cx="1081" cy="454" r="55" fill="#1c200a"/><circle cx="1058" cy="472" r="30" fill="#020300" filter="url(#b1)"/><path d="M1100 468l6-6" stroke="#8ab0d8" stroke-width="2.5" filter="url(#b1)"/><circle cx="712" cy="500.5" r="13.2" fill="#3a3a10"/><circle cx="712" cy="500.5" r="11" fill="#060702" stroke="#e8e000" stroke-width="1.6"/><circle cx="711" cy="500.0" r="6.8" fill="#000" stroke="#b0a800" stroke-width="0.9"/><circle cx="771" cy="491" r="15.2" fill="#3a3a10"/><circle cx="771" cy="491" r="13" fill="#060702" stroke="#e8e000" stroke-width="1.6"/><circle cx="770" cy="490.5" r="8.1" fill="#000" stroke="#b0a800" stroke-width="0.9"/><circle cx="1262.5" cy="507" r="7.7" fill="#3a3a10"/><circle cx="1262.5" cy="507" r="5.5" fill="#060702" stroke="#e8e000" stroke-width="1.6"/><circle cx="1261.5" cy="506.5" r="3.4" fill="#000" stroke="#b0a800" stroke-width="0.9"/><circle cx="929.5" cy="581.5" r="4.6" fill="#1a0c04" filter="url(#by)"/><circle cx="932.5" cy="444.5" r="2.6" fill="#1a0c04" filter="url(#by)"/><circle cx="933" cy="628" r="2.6" fill="#1a0c04" filter="url(#by)"/><circle cx="927" cy="632" r="1.8" fill="#1a0c04" filter="url(#by)"/><circle cx="933" cy="351" r="1.6" fill="#1a0c04" filter="url(#by)"/><circle cx="934" cy="374" r="1.6" fill="#1a0c04" filter="url(#by)"/><circle cx="932" cy="397" r="1.8" fill="#1a0c04" filter="url(#by)"/><circle cx="931" cy="418" r="1.6" fill="#1a0c04" filter="url(#by)"/><circle cx="1029" cy="410" r="1.8" fill="#1a0c04" filter="url(#by)"/><circle cx="1047" cy="577" r="1.4" fill="#1a0c04" filter="url(#by)"/><circle cx="1051" cy="589" r="1.4" fill="#1a0c04" filter="url(#by)"/><circle cx="1037" cy="607" r="1.4" fill="#1a0c04" filter="url(#by)"/><circle cx="877" cy="551" r="1.6" fill="#1a0c04" filter="url(#by)"/><g stroke="#e6e000" fill="none" filter="url(#by)" stroke-width="2"><path d="M638 287H1335M638 527H1335M740.6 199V743M1244.6 199V743" stroke-width="2" stroke="#b6b00c"/><circle cx="1081" cy="454" r="55" stroke-width="2.2"/><path d="M1030 639L1114 533.5L1140 534L1200 536L1295 537.5" stroke-width="2.2"/><path d="M1183 439.5L1293.5 506.3" stroke-width="1.6"/></g><circle cx="740.6" cy="287" r="3" fill="#f0ea00"/><circle cx="1244.6" cy="287" r="3" fill="#f0ea00"/><circle cx="740.6" cy="527" r="3" fill="#f0ea00"/><circle cx="1244.6" cy="527" r="3" fill="#f0ea00"/><circle cx="1081" cy="399" r="1.8" fill="#f0ea00"/><circle cx="1026" cy="454" r="1.8" fill="#f0ea00"/><circle cx="1106" cy="503" r="1.8" fill="#f0ea00"/><text x="718" y="283" font-size="5" font-family="Liberation Sans, DejaVu Sans, sans-serif" fill="#d8d200">1058 mm</text><text transform="translate(1251 283) rotate(-90)" font-size="5" font-family="Liberation Sans, DejaVu Sans, sans-serif" fill="#d8d200">505 mm</text><text x="1083" y="459" font-size="5" font-family="Liberation Sans, DejaVu Sans, sans-serif" fill="#d8d200">118 mm</text><text x="1182" y="439" font-size="5" font-family="Liberation Sans, DejaVu Sans, sans-serif" fill="#d8d200">329°</text><text x="1270" y="512" font-size="4" font-family="Liberation Sans, DejaVu Sans, sans-serif" fill="#d8d200">15 mm</text><text x="1118" y="537" font-size="4" font-family="Liberation Sans, DejaVu Sans, sans-serif" fill="#d8d200">233°</text><text x="798.5" y="245.5" font-size="28.6" textLength="367" lengthAdjust="spacingAndGlyphs" font-family="Liberation Sans, DejaVu Sans, sans-serif" fill="#f0f000" stroke="#f0f000" stroke-width="0.5" filter="url(#by)">Blow hole area measurement</text></svg>
<div class="rais1" style="position:absolute;left:1345px;top:131px;width:141px;height:3px;"></div>
<div class="rais1" style="position:absolute;left:1345px;top:135px;width:141px;height:3px;"></div>
<div class="rais1" style="position:absolute;left:1487px;top:129px;width:11px;height:11px;background:#d4d0c8"></div>
<svg style="left:1490px;top:131px" width="6" height="6" viewBox="0 0 6 6"><path d="M1 1l3 2-3 2z" fill="#000"/></svg>
<div class="rais1" style="position:absolute;left:1500px;top:129px;width:11px;height:11px;background:#d4d0c8"></div>
<svg style="left:1502px;top:131px" width="7" height="7" viewBox="0 0 7 7"><path d="M1 1l5 5M6 1L1 6" stroke="#000" stroke-width="1.4"/></svg>
<div style="position:absolute;left:1349px;top:144px;width:161px;height:619px;background:#d4d0c8;border:solid #4a4a48;border-width:3px 2px 2px 3px;box-shadow:inset -4px -4px 0 #f6f4f0"></div>
<div style="position:absolute;left:1359px;top:148px;width:124px;height:140px;background:#d4d0c8;border:1px solid;border-color:#f8f6f2 #5a5a5a #5a5a5a #f8f6f2;box-shadow:inset -1px -1px 0 #8a8880"></div>
<div style="position:absolute;left:1363px;top:165px;width:113.5px;height:88.5px;overflow:hidden"><svg style="left:0;top:0" width="113.5" height="88.5" viewBox="0 0 113 88" preserveAspectRatio="none">
<defs><filter id="tbr1" x="-10%" y="-10%" width="120%" height="120%"><feGaussianBlur stdDeviation="1.1"/></filter></defs>
<rect width="113" height="88" fill="#3f8f57"/>
<rect x="70" width="43" height="88" fill="#358a52"/>
<g filter="url(#tbr1)">
<ellipse cx="48" cy="36.5" rx="45.5" ry="35.5" fill="#2f9070"/>
<ellipse cx="48" cy="36.5" rx="43" ry="33" fill="#c8a870"/>
<ellipse cx="48" cy="36" rx="41" ry="31" fill="#1e1a10"/>
<path d="M8 40 C20 20 40 8 60 6 C75 8 84 20 88 34 C70 22 50 26 30 40 C20 46 12 48 8 40Z" fill="#5a5240"/><path d="M40 8 C50 4 64 6 72 10 L66 18 L48 14Z" fill="#a89878"/><path d="M70 14 L84 22 L88 36 L78 30Z" fill="#c8b898"/>
<path d="M12 50 L28 42 L52 30 L50 36 L26 52 L16 58Z" fill="#f2efe8"/>
<path d="M8 44 L20 42 L14 56Z" fill="#b8c4e0"/>
<path d="M50 24 L62 20 L64 30 L54 34Z" fill="#e8e4dc"/>
<path d="M66 34 L76 40 L74 46 L62 40Z" fill="#d8c8a0"/>
<ellipse cx="53" cy="46" rx="7" ry="4" fill="#c8b8a8"/><ellipse cx="53" cy="46" rx="3.5" ry="2" fill="#30281c"/>
<path d="M20 28 C30 16 46 10 58 10 C48 16 36 22 26 34Z" fill="#3a3020"/>
<path d="M30 62 C50 70 70 66 84 50 C80 66 60 76 40 70Z" fill="#d8b880"/>
</g>
<path d="M38 87v-5c0-3 4-4 8-4s8 1 8 4v5h-4v-4c0-1-2-2-4-2s-4 1-4 2v4z" fill="#e8dc9a"/>
<path d="M0 0h8c0 3-2 5-5 5-1 0-2 0-3-1z" fill="#c8c080" opacity="0.7"/>
<rect x="4" y="71" width="4" height="4" fill="#d8e000"/><rect x="11" y="72" width="6" height="3" fill="#a8c020"/><rect x="21" y="73" width="5" height="2" fill="#90b030"/>
<rect x="26" y="60" width="2" height="2" fill="#a0a020"/><rect x="33" y="55" width="2" height="2" fill="#a0a020"/><rect x="40" y="50" width="2" height="2" fill="#a0a020"/>
</svg></div>
<div style="position:absolute;top:268.5px;font-size:9.5px;line-height:14px;white-space:nowrap;color:#3a3a3a;font-family:'Liberation Sans','DejaVu Sans',sans-serif;left:1221px;width:400px;text-align:center;letter-spacing:-0.25px;">Blow hole</div>
<div style="position:absolute;left:1359px;top:291px;width:124px;height:138px;background:#d4d0c8;border:1px solid;border-color:#f8f6f2 #5a5a5a #5a5a5a #f8f6f2;box-shadow:inset -1px -1px 0 #8a8880"></div>
<div style="position:absolute;left:1363px;top:307px;width:113.5px;height:88px;overflow:hidden"><svg style="left:0;top:0" width="113.5" height="88" viewBox="0 0 114 88" preserveAspectRatio="none">
<defs><filter id="tbr2" x="-10%" y="-10%" width="120%" height="120%"><feGaussianBlur stdDeviation="0.7"/></filter></defs>
<rect width="114" height="88" fill="#12140a"/>
<g filter="url(#tbr2)">
<path d="M50 15 C46 26 30 34 0 48 L0 52 L29 52 C40 54 48 70 49 88 L66 88 C66 70 72 56 78 52 L110 52 L110 50 C100 46 90 40 84 38 C76 32 66 24 62 15Z" fill="#ddd6c0"/>
<path d="M50 14 L62 14 C64 26 65 36 65 50 L65 88 L50 88 L50 40 C50 30 50 22 50 14Z" fill="#fdecb0"/>
<circle cx="73" cy="41" r="9.5" fill="#0c0e04"/>
<circle cx="12" cy="49" r="2.2" fill="#0c0e04"/><circle cx="22" cy="47.5" r="2.6" fill="#0c0e04"/>
</g>
<path d="M0 52h29M78 52h32" stroke="#a87850" stroke-width="1.2"/>
</svg></div>
<div style="position:absolute;top:410px;font-size:9.5px;line-height:14px;white-space:nowrap;color:#3a3a3a;font-family:'Liberation Sans','DejaVu Sans',sans-serif;left:1221px;width:400px;text-align:center;letter-spacing:-0.25px;">Blow hole</div>
<div style="position:absolute;left:1359px;top:433px;width:124px;height:138px;background:#00008c;border:1px solid #1a1a90"></div>
<div style="position:absolute;left:1363px;top:454px;width:113.5px;height:75.5px;overflow:hidden"><svg style="left:0;top:0" width="113.5" height="75.5" viewBox="0 0 114 76" preserveAspectRatio="none">
<defs><filter id="tbr3" x="-10%" y="-10%" width="120%" height="120%"><feGaussianBlur stdDeviation="1.0"/></filter>
<linearGradient id="ogr3" x1="0" x2="0" y1="0" y2="1"><stop offset="0" stop-color="#f08a10"/><stop offset="0.55" stop-color="#e87c0c"/><stop offset="0.8" stop-color="#d06808"/><stop offset="1" stop-color="#f0a020"/></linearGradient></defs>
<rect width="114" height="76" fill="url(#ogr3)"/>
<g filter="url(#tbr3)">
<path d="M80 14 L114 12 L114 52 L84 50 C80 40 78 26 80 14Z" fill="#9a4a10"/>
<path d="M92 22 L114 20 L114 46 L96 44Z" fill="#6a3008"/>
<path d="M26 44 C40 38 50 30 56 16 C60 6 70 2 84 3 L108 2 L108 10 L88 12 C84 20 84 36 82 48 L70 50 C66 42 60 42 50 44 C40 46 32 46 26 44Z" fill="#f6e088"/>
<path d="M60 18 C64 10 72 8 82 8 M54 30 C60 24 62 16 66 12" stroke="#d89a30" stroke-width="1.6" fill="none"/>
<circle cx="66" cy="44" r="2.6" fill="#7a3a08"/>
<path d="M0 68 L90 66 L114 70 L114 72 L0 72Z" fill="#f8d060"/>
<path d="M0 72 L114 72 L114 76 L0 76Z" fill="#f4b030"/>
</g>
</svg></div>
<div style="position:absolute;top:552px;font-size:9.5px;line-height:14px;white-space:nowrap;color:#f0f0ff;font-family:'Liberation Sans','DejaVu Sans',sans-serif;left:1221px;width:400px;text-align:center;letter-spacing:-0.25px;">Jf26tf</div>
<div style="position:absolute;left:1359px;top:575px;width:124px;height:138px;background:#d4d0c8;border:1px solid;border-color:#f8f6f2 #5a5a5a #5a5a5a #f8f6f2;box-shadow:inset -1px -1px 0 #8a8880"></div>
<div style="position:absolute;left:1363px;top:592px;width:113.5px;height:84.5px;overflow:hidden"><svg style="left:0;top:0" width="113.5" height="84.5" viewBox="0 0 114 85" preserveAspectRatio="none">
<defs><filter id="tbr4" x="-10%" y="-10%" width="120%" height="120%"><feGaussianBlur stdDeviation="1.1"/></filter>
<linearGradient id="cgr4" x1="0" x2="1" y1="0" y2="0.3"><stop offset="0" stop-color="#3a3830"/><stop offset="0.12" stop-color="#6a6658"/><stop offset="0.2" stop-color="#2a2a24"/><stop offset="0.45" stop-color="#4a463c"/><stop offset="0.7" stop-color="#38362e"/><stop offset="0.85" stop-color="#1e1e1a"/><stop offset="1" stop-color="#4a483e"/></linearGradient></defs>
<rect width="114" height="85" fill="url(#cgr4)"/>
<g filter="url(#tbr4)">
<path d="M8 0 L22 0 L14 85 L0 85Z" fill="#6e6a5a" opacity="0.7"/>
<path d="M50 0 L92 0 L86 36 L44 30Z" fill="#a89080"/>
<path d="M54 0 L88 0 L84 28 L50 24Z" fill="#b8a090"/>
<path d="M44 28 L86 35 L84 46 L42 40Z" fill="#f0f4f8"/>
<path d="M34 44 C34 40 40 38 44 39 L84 46 C86 52 84 66 80 72 C76 78 70 78 64 76 L36 66 C30 64 30 52 34 44Z" fill="#8898a4"/>
<path d="M36 48 L80 54 L78 66 L40 60Z" fill="#a8b8c4"/>
<path d="M34 58 C40 66 60 74 76 74 L70 78 L36 67Z" fill="#e0e8ee"/>
<circle cx="56" cy="57" r="6" fill="#56646e"/><circle cx="57" cy="56" r="3.4" fill="#c8d4dc"/>
<path d="M92 0 L114 0 L114 85 L96 85 C98 60 96 30 92 0Z" fill="#20201c" opacity="0.6"/>
</g>
</svg></div>
<div style="position:absolute;top:694px;font-size:9.5px;line-height:14px;white-space:nowrap;color:#3a3a3a;font-family:'Liberation Sans','DejaVu Sans',sans-serif;left:1221px;width:400px;text-align:center;letter-spacing:-0.25px;">C_blow Sou</div>
<div style="position:absolute;left:1356px;top:759px;width:75px;height:27px;background:#d4d0c8;border:1px solid;border-color:#d4d0c8 #404040 #404040 #fff;box-shadow:inset -1px -1px 0 #808080"></div>
<svg style="left:1362px;top:765px" width="16" height="18" viewBox="0 0 16 18"><rect x="1" y="5" width="13" height="12" fill="#6a6a10"/><path d="M3 16V3h3v6l2-6h2l2 5v8" fill="none" stroke="#000" stroke-width="1.8"/><rect x="6" y="8" width="4" height="5" fill="#d8d860"/></svg>
<div style="position:absolute;top:766px;font-size:11.5px;line-height:18px;white-space:nowrap;color:#111;font-family:'Liberation Sans','DejaVu Sans',sans-serif;letter-spacing:-0.281px;font-weight:bold;left:1381px;">Clipb....</div>
<div style="position:absolute;left:1431px;top:763px;width:69px;height:21px;background:#d4d0c8;border:1px solid;border-color:#d4d0c8 #404040 #404040 #808080;box-shadow:inset -1px -1px 0 #808080"></div>
<svg style="left:1435px;top:765px" width="16" height="15" viewBox="0 0 16 15"><path d="M1 5h5l2-3h6v4H4z" fill="#7a7a18" stroke="#333" stroke-width="0.8"/><path d="M1 14L4 6h11l-3 8z" fill="#c8c020" stroke="#333" stroke-width="0.8"/></svg>
<div style="position:absolute;top:766px;font-size:11.5px;line-height:16px;white-space:nowrap;color:#4a4a4a;font-family:'Liberation Sans','DejaVu Sans',sans-serif;letter-spacing:-1.114px;left:1454px;">Open....</div>
<div style="position:absolute;left:1514px;top:127px;width:1px;height:664px;background:#fff"></div>
<div style="position:absolute;left:1517px;top:127px;width:1px;height:664px;background:#9a9890"></div>
<div style="position:absolute;left:1518px;top:127px;width:1px;height:664px;background:#fff"></div>
<div style="position:absolute;left:1520px;top:128px;width:31px;height:634px;border:1px solid;border-color:#f4f2ee #9a9890 #9a9890 #f4f2ee"></div>
<div class="rais1" style="position:absolute;left:1523px;top:131px;width:25px;height:3px;"></div>
<svg style="left:1525.4px;top:138.9px" width="16.2" height="16.2" viewBox="0 0 18 18"><rect x="7" y="1" width="4" height="16" fill="#e8e000" stroke="#8a8400" stroke-width="0.6"/><rect x="0" y="4" width="18" height="3" fill="#e8e000" stroke="#555" stroke-width="0.6"/><rect x="2" y="9" width="14" height="2.4" fill="#e8e000" stroke="#555" stroke-width="0.6"/></svg>
<svg style="left:1525.4px;top:161.9px" width="16.2" height="16.2" viewBox="0 0 18 18"><path d="M3 2v14h12" fill="none" stroke="#9a9890" stroke-width="1.6"/><path d="M7 5h7M7 9h5" stroke="#b0aea6" stroke-width="1.4"/></svg>
<svg style="left:1525.4px;top:186.4px" width="16.2" height="16.2" viewBox="0 0 18 18"><path d="M3 1v16" stroke="#d8d000" stroke-width="3"/><path d="M6 3h7l3 3-5 9H6z" fill="#f4f4ea" stroke="#222" stroke-width="1.4"/><path d="M9 11l5-5" stroke="#222" stroke-width="1.6"/></svg>
<div class="sunk1" style="position:absolute;left:1523px;top:208px;width:25px;height:2px;"></div>
<svg style="left:1525.4px;top:213.9px" width="16.2" height="16.2" viewBox="0 0 18 18"><rect x="7" y="1" width="4" height="16" fill="#e8e000" stroke="#8a8400" stroke-width="0.6"/><rect x="0" y="4" width="18" height="3" fill="#e8e000" stroke="#555" stroke-width="0.6"/><rect x="2" y="9" width="14" height="2.4" fill="#e8e000" stroke="#555" stroke-width="0.6"/><rect x="2" y="13" width="14" height="3" fill="#e8e000" stroke="#555" stroke-width="0.6"/></svg>
<div class="sunk1" style="position:absolute;left:1523px;top:237px;width:25px;height:2px;"></div>
<svg style="left:1526.5px;top:244.0px" width="14.0" height="14.0" viewBox="0 0 18 18"><path d="M3 15L15 3" stroke="#222" stroke-width="1.8"/><rect x="1" y="13" width="4" height="4" fill="#222"/><rect x="13" y="1" width="4" height="4" fill="#222"/></svg>
<svg style="left:1526.5px;top:268.0px" width="14.0" height="14.0" viewBox="0 0 18 18"><path d="M3 15L15 3" stroke="#666" stroke-width="1.3"/><path d="M6 7l6 6" stroke="#666" stroke-width="1.3"/><path d="M2 10l5 5" stroke="#888" stroke-width="1"/></svg>
<svg style="left:1526.5px;top:291.5px" width="14.0" height="14.0" viewBox="0 0 18 18"><path d="M3 3L15 15" stroke="#222" stroke-width="1.4"/></svg>
<svg style="left:1526.5px;top:316.0px" width="14.0" height="14.0" viewBox="0 0 18 18"><path d="M4 4L14 14M4 12l5-5" stroke="#666" stroke-width="1.3"/><path d="M11 15l4-4" stroke="#888" stroke-width="1"/></svg>
<svg style="left:1526.5px;top:338.5px" width="14.0" height="14.0" viewBox="0 0 18 18"><path d="M5 6l8 8M4 10l8 8M8 2l8 8" stroke="#444" stroke-width="1.3" stroke-dasharray="3 2"/></svg>
<svg style="left:1526.5px;top:362.0px" width="14.0" height="14.0" viewBox="0 0 18 18"><path d="M4 14L14 4M7 16l-4-4M10 6l6 6" stroke="#555" stroke-width="1.3"/><rect x="11" y="3" width="3" height="3" fill="#333"/></svg>
<svg style="left:1526.5px;top:385.5px" width="14.0" height="14.0" viewBox="0 0 18 18"><path d="M3 13C3 4 14 3 15 10" fill="none" stroke="#333" stroke-width="1.5"/><path d="M1 11l2 4 3-3" fill="none" stroke="#333" stroke-width="1.2"/></svg>
<svg style="left:1525.4px;top:407.9px" width="16.2" height="16.2" viewBox="0 0 18 18"><path d="M6 1v16M12 1v16M1 6h16M1 12h16" stroke="#222" stroke-width="1.2"/><rect x="4" y="4" width="4" height="4" fill="#222"/><rect x="10" y="4" width="4" height="4" fill="#222"/><rect x="4" y="10" width="4" height="4" fill="#222"/><rect x="10" y="10" width="4" height="4" fill="#222"/></svg>
<div class="sunk1" style="position:absolute;left:1523px;top:429px;width:25px;height:2px;"></div>
<svg style="left:1525.4px;top:435.9px" width="16.2" height="16.2" viewBox="0 0 18 18"><path d="M2 11C3 5 10 3 15 5C18 8 13 14 7 14C4 14 2 13 2 11Z" fill="#eceae4" stroke="#333" stroke-width="1.4"/></svg>
<svg style="left:1525.4px;top:458.9px" width="16.2" height="16.2" viewBox="0 0 18 18"><path d="M2 10L10 3l6 5-8 7z" fill="#eceae4" stroke="#333" stroke-width="1.4"/></svg>
<svg style="left:1525.4px;top:483.4px" width="16.2" height="16.2" viewBox="0 0 18 18"><rect x="2" y="5" width="14" height="9" fill="#eceae4" stroke="#333" stroke-width="1.6"/></svg>
<svg style="left:1525.4px;top:506.9px" width="16.2" height="16.2" viewBox="0 0 18 18"><circle cx="9" cy="9" r="6" fill="none" stroke="#a8a6a0" stroke-width="1.4"/><path d="M9 9l4 4" stroke="#777" stroke-width="1.4"/></svg>
<svg style="left:1525.4px;top:529.9px" width="16.2" height="16.2" viewBox="0 0 18 18"><circle cx="9" cy="9" r="6" fill="none" stroke="#222" stroke-width="2.6" stroke-dasharray="3.4 3"/></svg>
<div class="sunk1" style="position:absolute;left:1523px;top:552px;width:25px;height:2px;"></div>
<svg style="left:1526.5px;top:560.0px" width="14.0" height="14.0" viewBox="0 0 18 18"><path d="M15 2L3 9l12 7" fill="none" stroke="#333" stroke-width="1.4"/></svg>
<svg style="left:1526.5px;top:582.0px" width="14.0" height="14.0" viewBox="0 0 18 18"><path d="M15 2L3 9l12 7" fill="none" stroke="#333" stroke-width="1.4"/></svg>
<div class="sunk1" style="position:absolute;left:1523px;top:603px;width:25px;height:2px;"></div>
<svg style="left:1526.5px;top:610.5px" width="14.0" height="14.0" viewBox="0 0 18 18"><rect x="4" y="4" width="3" height="3" fill="#222"/><rect x="11" y="4" width="3" height="3" fill="#222"/><rect x="4" y="11" width="3" height="3" fill="#222"/><rect x="11" y="11" width="3" height="3" fill="#222"/></svg>
<svg style="left:1526.5px;top:635.0px" width="14.0" height="14.0" viewBox="0 0 18 18"><path d="M6 6l6 6M12 6l-6 6" stroke="#666" stroke-width="1.2"/></svg>
<svg style="left:1526.5px;top:657.5px" width="14.0" height="14.0" viewBox="0 0 18 18"><rect x="2" y="2" width="14" height="14" fill="#f4f4f0" stroke="#222" stroke-width="1.6"/><path d="M9 4v10M4 9h10" stroke="#222" stroke-width="1.4"/><rect x="4" y="4" width="3" height="3" fill="#222"/><rect x="11" y="4" width="3" height="3" fill="#222"/><rect x="4" y="11" width="3" height="3" fill="#222"/><rect x="11" y="11" width="3" height="3" fill="#222"/></svg>
<svg style="left:1526.5px;top:686.0px" width="14.0" height="14.0" viewBox="0 0 18 18"><path d="M3 6h9v10H3z" fill="#eceae4" stroke="#222" stroke-width="1.4"/><path d="M3 6l3-4h9l-3 4M15 2v10l-3 4" fill="none" stroke="#222" stroke-width="1.4"/></svg>
<div class="sunk1" style="position:absolute;left:1523px;top:707px;width:25px;height:2px;"></div>
<div style="position:absolute;left:1522px;top:711px;width:25px;height:24px;background:#eceae4;border:1px solid;border-color:#808080 #fff #fff #808080"></div>
<svg style="left:1525.4px;top:714.4px" width="16.2" height="16.2" viewBox="0 0 18 18"><rect x="1.5" y="2" width="15" height="14" fill="#fff" stroke="#223" stroke-width="1.4"/><rect x="1.5" y="2" width="15" height="4" fill="#28288a"/><path d="M6.5 6v10M11.5 6v10M2 11h14" stroke="#446" stroke-width="1"/></svg>
<svg style="left:1525.4px;top:737.4px" width="16.2" height="16.2" viewBox="0 0 18 18"><rect x="4" y="3" width="10" height="12" fill="#e02028" stroke="#8a1018" stroke-width="1"/></svg>
<div style="position:absolute;left:249px;top:791px;width:1302px;height:1px;background:#f4f2ee"></div>
<div style="position:absolute;left:249px;top:794.5px;width:1302px;height:2.5px;background:#5e5c58"></div>
<div style="position:absolute;left:249px;top:797px;width:1302px;height:1px;background:#a8a6a0"></div>
<div style="position:absolute;left:249px;top:798px;width:1302px;height:3px;background:#eeece6"></div>
<div class="rais1" style="position:absolute;left:254px;top:802px;width:9px;height:10px;background:#d4d0c8"></div>
<svg style="left:255px;top:804px" width="7" height="7" viewBox="0 0 7 7"><path d="M1 1l4 4M5 1L1 5" stroke="#000" stroke-width="1.2"/></svg>
<div class="rais1" style="position:absolute;left:254px;top:814px;width:9px;height:9px;background:#d4d0c8"></div>
<svg style="left:256px;top:816px" width="6" height="6" viewBox="0 0 6 6"><path d="M1 0.5l3 2-3 2z" fill="#000"/></svg>
<div class="rais1" style="position:absolute;left:266px;top:802px;width:3px;height:182px;"></div>
<div class="lst" style="position:absolute;left:272px;top:804px;width:158px;height:148px;background:#fff"></div>
<div class="hdr" style="position:absolute;left:274px;top:806px;width:154px;height:19px;background:#d4d0c8"></div>
<div style="position:absolute;top:807px;font-size:14.5px;line-height:18px;white-space:nowrap;color:#443c40;font-family:'Liberation Sans','DejaVu Sans',sans-serif;letter-spacing:-0.299px;left:280px;">Directories</div>
<div style="position:absolute;left:314px;top:827px;width:113px;height:17px;background:#d4d0c8"></div>
<svg style="left:283px;top:830px" width="16" height="28" viewBox="0 0 16 28"><path d="M1 0v22M1 5h8M1 22h8" stroke="#b8b8b8" stroke-width="1" fill="none"/></svg>
<svg style="left:295px;top:827px" width="14" height="13" viewBox="0 0 14 13"><rect x="1" y="2" width="11" height="9" fill="#f0e000" stroke="#6a5a00" stroke-width="1"/><path d="M3 3l7 7M10 3l-7 7" stroke="#e02020" stroke-width="2"/></svg>
<svg style="left:295px;top:846px" width="14" height="12" viewBox="0 0 14 12"><path d="M1 3h4l1 1.5h6v6H1z" fill="#f0e000" stroke="#6a5a00" stroke-width="1"/></svg>
<div style="position:absolute;top:826px;font-size:14.5px;line-height:18px;white-space:nowrap;color:#3e363c;font-family:'Liberation Sans','DejaVu Sans',sans-serif;letter-spacing:-0.291px;left:317px;">Demo Database</div>
<div style="position:absolute;top:844px;font-size:14.5px;line-height:18px;white-space:nowrap;color:#3e363c;font-family:'Liberation Sans','DejaVu Sans',sans-serif;letter-spacing:-0.469px;left:317px;">ES2</div>
<div class="lst" style="position:absolute;left:432px;top:804px;width:146px;height:148px;background:#fff"></div>
<div class="hdr" style="position:absolute;left:434px;top:806px;width:54px;height:19px;background:#d4d0c8"></div>
<div class="hdr" style="position:absolute;left:488px;top:806px;width:88px;height:19px;background:#d4d0c8"></div>
<div style="position:absolute;top:807px;font-size:14.5px;line-height:18px;white-space:nowrap;color:#443c40;font-family:'Liberation Sans','DejaVu Sans',sans-serif;letter-spacing:-0.257px;left:494px;">Checked by</div>
<div style="position:absolute;left:434px;top:827px;width:142px;height:17px;background:#d4d0c8"></div>
<div style="position:absolute;top:826px;font-size:14.5px;line-height:18px;white-space:nowrap;color:#3e363c;font-family:'Liberation Sans','DejaVu Sans',sans-serif;letter-spacing:-0.469px;left:494px;">SystemAd...</div>
<div style="position:absolute;top:844px;font-size:14.5px;line-height:18px;white-space:nowrap;color:#3e363c;font-family:'Liberation Sans','DejaVu Sans',sans-serif;letter-spacing:-0.420px;left:494px;">Admin</div>
<div style="position:absolute;top:862.5px;font-size:14.5px;line-height:18px;white-space:nowrap;color:#3e363c;font-family:'Liberation Sans','DejaVu Sans',sans-serif;letter-spacing:-0.420px;left:494px;">Admin</div>
<div style="position:absolute;left:581px;top:802px;width:965px;height:155px;background:#d4d0c8;border:solid #4a4a48;border-width:3px 2px 2px 3px;box-shadow:inset -4px -4px 0 #f6f4f0"></div>
<div style="position:absolute;left:588px;top:808px;width:125px;height:138px;background:#d4d0c8;border:1px solid;border-color:#f8f6f2 #5a5a5a #5a5a5a #f8f6f2;box-shadow:inset -1px -1px 0 #8a8880"></div>
<div style="position:absolute;left:594px;top:824px;width:113.5px;height:86px;overflow:hidden"><svg style="left:0;top:0" width="113.5" height="86" viewBox="0 0 114 86" preserveAspectRatio="none"><rect width="114" height="86" fill="#fdfdfd"/><rect x="4" y="0" width="1.4" height="32" fill="#8e8e8e"/><rect x="7" y="0" width="1.4" height="24" fill="#8e8e8e"/><rect x="10" y="0" width="1.4" height="24" fill="#8e8e8e"/><rect x="13" y="0" width="1.4" height="24" fill="#8e8e8e"/><rect x="17" y="0" width="1.4" height="32" fill="#8e8e8e"/><rect x="21" y="0" width="1.4" height="24" fill="#8e8e8e"/><rect x="24" y="0" width="1.4" height="24" fill="#8e8e8e"/><rect x="28" y="0" width="1.4" height="24" fill="#8e8e8e"/><rect x="32" y="0" width="1.4" height="32" fill="#8e8e8e"/><rect x="36" y="0" width="1.4" height="24" fill="#8e8e8e"/><rect x="40" y="0" width="1.4" height="24" fill="#8e8e8e"/><rect x="44" y="0" width="1.4" height="24" fill="#8e8e8e"/><rect x="48" y="0" width="1.4" height="32" fill="#8e8e8e"/><rect x="52" y="0" width="1.4" height="24" fill="#8e8e8e"/><rect x="56" y="0" width="1.4" height="24" fill="#8e8e8e"/><rect x="64" y="0" width="1.4" height="24" fill="#8e8e8e"/><rect x="68" y="0" width="1.4" height="32" fill="#8e8e8e"/><rect x="72" y="0" width="1.4" height="24" fill="#8e8e8e"/><rect x="76" y="0" width="1.4" height="24" fill="#8e8e8e"/><rect x="80" y="0" width="1.4" height="24" fill="#8e8e8e"/><rect x="84" y="0" width="1.4" height="32" fill="#8e8e8e"/><rect x="88" y="0" width="1.4" height="24" fill="#8e8e8e"/><rect x="92" y="0" width="1.4" height="24" fill="#8e8e8e"/><rect x="96" y="0" width="1.4" height="24" fill="#8e8e8e"/><rect x="100" y="0" width="1.4" height="32" fill="#8e8e8e"/><rect x="104" y="0" width="1.4" height="24" fill="#8e8e8e"/><rect x="107" y="0" width="1.4" height="24" fill="#8e8e8e"/><rect x="110" y="0" width="1.4" height="24" fill="#8e8e8e"/><rect x="8" y="0" width="1" height="86" fill="#d0d0d0"/><rect x="62" y="0" width="1.2" height="86" fill="#9a9a9a"/><rect x="0" y="84" width="114" height="2" fill="#c8c8c8"/><rect x="6" y="23" width="56" height="1.6" fill="#e83030"/><rect x="66" y="23.5" width="2" height="1" fill="#e8a0a0"/></svg></div>
<div style="position:absolute;top:927px;font-size:9.5px;line-height:14px;white-space:nowrap;color:#3a3a3a;font-family:'Liberation Sans','DejaVu Sans',sans-serif;left:450.5px;width:400px;text-align:center;letter-spacing:-0.25px;">cal40</div>
<div style="position:absolute;left:722px;top:808px;width:125px;height:138px;background:#d4d0c8;border:1px solid;border-color:#f8f6f2 #5a5a5a #5a5a5a #f8f6f2;box-shadow:inset -1px -1px 0 #8a8880"></div>
<div style="position:absolute;left:727px;top:822px;width:114px;height:90px;overflow:hidden"><svg style="left:0;top:0" width="114" height="90" viewBox="0 0 114 86" preserveAspectRatio="none">
<defs><filter id="mnb2" color-interpolation-filters="sRGB" x="0" y="0" width="100%" height="100%"><feTurbulence type="fractalNoise" baseFrequency="0.55" numOctaves="2" seed="3"/><feColorMatrix type="matrix" values="0 0 0 0 0.35  0 0 0 0 0.35  0 0 0 0 0.36  0 0 0 -2.4 1.3"/></filter>
<filter id="tbb2"><feGaussianBlur stdDeviation="0.8"/></filter></defs>
<rect width="114" height="86" fill="#e2e2e2"/>
<rect width="114" height="86" filter="url(#mnb2)"/>
<g filter="url(#tbb2)"><rect x="50" y="0" width="15" height="86" fill="#2c2c2c"/><rect x="53" y="0" width="8" height="86" fill="#1a1a1a"/></g>
<rect x="2" y="14" width="2" height="6" fill="#e02020"/><path d="M70 18l8-2" stroke="#e03030" stroke-width="1.2"/>
</svg></div>
<div style="position:absolute;top:927px;font-size:9.5px;line-height:14px;white-space:nowrap;color:#3a3a3a;font-family:'Liberation Sans','DejaVu Sans',sans-serif;left:584.5px;width:400px;text-align:center;letter-spacing:-0.25px;">Mikroscope</div>
<div style="position:absolute;left:856px;top:808px;width:125px;height:138px;background:#d4d0c8;border:1px solid;border-color:#f8f6f2 #5a5a5a #5a5a5a #f8f6f2;box-shadow:inset -1px -1px 0 #8a8880"></div>
<div style="position:absolute;left:860px;top:824px;width:114px;height:88px;overflow:hidden"><svg style="left:0;top:0" width="114" height="88" viewBox="0 0 113 88" preserveAspectRatio="none">
<defs><filter id="tbb3" x="-10%" y="-10%" width="120%" height="120%"><feGaussianBlur stdDeviation="1.1"/></filter></defs>
<rect width="113" height="88" fill="#3f8f57"/>
<rect x="70" width="43" height="88" fill="#358a52"/>
<g filter="url(#tbb3)">
<ellipse cx="48" cy="36.5" rx="45.5" ry="35.5" fill="#2f9070"/>
<ellipse cx="48" cy="36.5" rx="43" ry="33" fill="#c8a870"/>
<ellipse cx="48" cy="36" rx="41" ry="31" fill="#1e1a10"/>
<path d="M8 40 C20 20 40 8 60 6 C75 8 84 20 88 34 C70 22 50 26 30 40 C20 46 12 48 8 40Z" fill="#5a5240"/><path d="M40 8 C50 4 64 6 72 10 L66 18 L48 14Z" fill="#a89878"/><path d="M70 14 L84 22 L88 36 L78 30Z" fill="#c8b898"/>
<path d="M12 50 L28 42 L52 30 L50 36 L26 52 L16 58Z" fill="#f2efe8"/>
<path d="M8 44 L20 42 L14 56Z" fill="#b8c4e0"/>
<path d="M50 24 L62 20 L64 30 L54 34Z" fill="#e8e4dc"/>
<path d="M66 34 L76 40 L74 46 L62 40Z" fill="#d8c8a0"/>
<ellipse cx="53" cy="46" rx="7" ry="4" fill="#c8b8a8"/><ellipse cx="53" cy="46" rx="3.5" ry="2" fill="#30281c"/>
<path d="M20 28 C30 16 46 10 58 10 C48 16 36 22 26 34Z" fill="#3a3020"/>
<path d="M30 62 C50 70 70 66 84 50 C80 66 60 76 40 70Z" fill="#d8b880"/>
</g>
<path d="M38 87v-5c0-3 4-4 8-4s8 1 8 4v5h-4v-4c0-1-2-2-4-2s-4 1-4 2v4z" fill="#e8dc9a"/>
<path d="M0 0h8c0 3-2 5-5 5-1 0-2 0-3-1z" fill="#c8c080" opacity="0.7"/>
<rect x="4" y="71" width="4" height="4" fill="#d8e000"/><rect x="11" y="72" width="6" height="3" fill="#a8c020"/><rect x="21" y="73" width="5" height="2" fill="#90b030"/>
<rect x="26" y="60" width="2" height="2" fill="#a0a020"/><rect x="33" y="55" width="2" height="2" fill="#a0a020"/><rect x="40" y="50" width="2" height="2" fill="#a0a020"/>
</svg></div>
<div style="position:absolute;top:927px;font-size:9.5px;line-height:14px;white-space:nowrap;color:#3a3a3a;font-family:'Liberation Sans','DejaVu Sans',sans-serif;left:718.5px;width:400px;text-align:center;letter-spacing:-0.25px;">Blow hole</div>
<div style="position:absolute;left:989px;top:808px;width:125px;height:138px;background:#d4d0c8;border:1px solid;border-color:#f8f6f2 #5a5a5a #5a5a5a #f8f6f2;box-shadow:inset -1px -1px 0 #8a8880"></div>
<div style="position:absolute;left:993.5px;top:824px;width:114.5px;height:88px;overflow:hidden"><svg style="left:0;top:0" width="114.5" height="88" viewBox="0 0 114 88" preserveAspectRatio="none">
<defs><filter id="tbb4" x="-10%" y="-10%" width="120%" height="120%"><feGaussianBlur stdDeviation="0.7"/></filter></defs>
<rect width="114" height="88" fill="#12140a"/>
<g filter="url(#tbb4)">
<path d="M50 15 C46 26 30 34 0 48 L0 52 L29 52 C40 54 48 70 49 88 L66 88 C66 70 72 56 78 52 L110 52 L110 50 C100 46 90 40 84 38 C76 32 66 24 62 15Z" fill="#ddd6c0"/>
<path d="M50 14 L62 14 C64 26 65 36 65 50 L65 88 L50 88 L50 40 C50 30 50 22 50 14Z" fill="#fdecb0"/>
<circle cx="73" cy="41" r="9.5" fill="#0c0e04"/>
<circle cx="12" cy="49" r="2.2" fill="#0c0e04"/><circle cx="22" cy="47.5" r="2.6" fill="#0c0e04"/>
</g>
<path d="M0 52h29M78 52h32" stroke="#a87850" stroke-width="1.2"/>
</svg></div>
<div style="position:absolute;top:927px;font-size:9.5px;line-height:14px;white-space:nowrap;color:#3a3a3a;font-family:'Liberation Sans','DejaVu Sans',sans-serif;left:851.5px;width:400px;text-align:center;letter-spacing:-0.25px;">Blow hole</div>
<div style="position:absolute;left:1123px;top:808px;width:125px;height:138px;background:#d4d0c8;border:1px solid;border-color:#f8f6f2 #5a5a5a #5a5a5a #f8f6f2;box-shadow:inset -1px -1px 0 #8a8880"></div>
<div style="position:absolute;left:1127px;top:825px;width:114.5px;height:85px;overflow:hidden"><svg style="left:0;top:0" width="114.5" height="85" viewBox="0 0 114 85" preserveAspectRatio="none">
<defs><filter id="tbb5" x="-10%" y="-10%" width="120%" height="120%"><feGaussianBlur stdDeviation="1.1"/></filter>
<linearGradient id="cgb5" x1="0" x2="1" y1="0" y2="0.3"><stop offset="0" stop-color="#3a3830"/><stop offset="0.12" stop-color="#6a6658"/><stop offset="0.2" stop-color="#2a2a24"/><stop offset="0.45" stop-color="#4a463c"/><stop offset="0.7" stop-color="#38362e"/><stop offset="0.85" stop-color="#1e1e1a"/><stop offset="1" stop-color="#4a483e"/></linearGradient></defs>
<rect width="114" height="85" fill="url(#cgb5)"/>
<g filter="url(#tbb5)">
<path d="M8 0 L22 0 L14 85 L0 85Z" fill="#6e6a5a" opacity="0.7"/>
<path d="M50 0 L92 0 L86 36 L44 30Z" fill="#a89080"/>
<path d="M54 0 L88 0 L84 28 L50 24Z" fill="#b8a090"/>
<path d="M44 28 L86 35 L84 46 L42 40Z" fill="#f0f4f8"/>
<path d="M34 44 C34 40 40 38 44 39 L84 46 C86 52 84 66 80 72 C76 78 70 78 64 76 L36 66 C30 64 30 52 34 44Z" fill="#8898a4"/>
<path d="M36 48 L80 54 L78 66 L40 60Z" fill="#a8b8c4"/>
<path d="M34 58 C40 66 60 74 76 74 L70 78 L36 67Z" fill="#e0e8ee"/>
<circle cx="56" cy="57" r="6" fill="#56646e"/><circle cx="57" cy="56" r="3.4" fill="#c8d4dc"/>
<path d="M92 0 L114 0 L114 85 L96 85 C98 60 96 30 92 0Z" fill="#20201c" opacity="0.6"/>
</g>
</svg></div>
<div style="position:absolute;top:927px;font-size:9.5px;line-height:14px;white-space:nowrap;color:#3a3a3a;font-family:'Liberation Sans','DejaVu Sans',sans-serif;left:985.5px;width:400px;text-align:center;letter-spacing:-0.25px;">C_blow Sou</div>
<div style="position:absolute;left:1256px;top:808px;width:125px;height:138px;background:#00008c;border:1px solid #1a1a90"></div>
<div style="position:absolute;left:1261px;top:829px;width:114px;height:76px;overflow:hidden"><svg style="left:0;top:0" width="114" height="76" viewBox="0 0 114 76" preserveAspectRatio="none">
<defs><filter id="tbb6" x="-10%" y="-10%" width="120%" height="120%"><feGaussianBlur stdDeviation="1.0"/></filter>
<linearGradient id="ogb6" x1="0" x2="0" y1="0" y2="1"><stop offset="0" stop-color="#f08a10"/><stop offset="0.55" stop-color="#e87c0c"/><stop offset="0.8" stop-color="#d06808"/><stop offset="1" stop-color="#f0a020"/></linearGradient></defs>
<rect width="114" height="76" fill="url(#ogb6)"/>
<g filter="url(#tbb6)">
<path d="M80 14 L114 12 L114 52 L84 50 C80 40 78 26 80 14Z" fill="#9a4a10"/>
<path d="M92 22 L114 20 L114 46 L96 44Z" fill="#6a3008"/>
<path d="M26 44 C40 38 50 30 56 16 C60 6 70 2 84 3 L108 2 L108 10 L88 12 C84 20 84 36 82 48 L70 50 C66 42 60 42 50 44 C40 46 32 46 26 44Z" fill="#f6e088"/>
<path d="M60 18 C64 10 72 8 82 8 M54 30 C60 24 62 16 66 12" stroke="#d89a30" stroke-width="1.6" fill="none"/>
<circle cx="66" cy="44" r="2.6" fill="#7a3a08"/>
<path d="M0 68 L90 66 L114 70 L114 72 L0 72Z" fill="#f8d060"/>
<path d="M0 72 L114 72 L114 76 L0 76Z" fill="#f4b030"/>
</g>
</svg></div>
<div style="position:absolute;top:927px;font-size:9.5px;line-height:14px;white-space:nowrap;color:#f0f0ff;font-family:'Liberation Sans','DejaVu Sans',sans-serif;left:1118.5px;width:400px;text-align:center;letter-spacing:-0.25px;">Jf26tf</div>
<div style="position:absolute;left:277px;top:955px;width:79px;height:27px;background:#d4d0c8;border:1px solid;border-color:#d4d0c8 #404040 #404040 #fff;box-shadow:inset -1px -1px 0 #808080"></div>
<div style="position:absolute;top:961px;font-size:11.5px;line-height:18px;white-space:nowrap;color:#111;font-family:'Liberation Sans','DejaVu Sans',sans-serif;letter-spacing:-0.304px;font-weight:bold;left:302px;">Data file</div>
<svg style="left:281px;top:958px" width="20" height="20" viewBox="0 0 20 20"><path d="M2 14C3 7 8 3 14 3c3 0 5 2 5 4-2-1-5-1-7 1l5 8-3 2-4-7c-2 1-4 3-4 6z" fill="#c8d0e8" stroke="#223" stroke-width="1.2"/><path d="M4 6C7 2 13 1 17 4" fill="none" stroke="#1a2a8a" stroke-width="1.8"/></svg>
<div style="position:absolute;left:356px;top:958px;width:119px;height:21px;background:#d4d0c8;border:1px solid;border-color:#d4d0c8 #404040 #404040 #808080;box-shadow:inset -1px -1px 0 #808080"></div>
<div style="position:absolute;top:960px;font-size:11.5px;line-height:16px;white-space:nowrap;color:#4a4a4a;font-family:'Liberation Sans','DejaVu Sans',sans-serif;letter-spacing:-0.965px;left:377px;">Problem/solutions</div>
<div style="position:absolute;top:959px;font-size:11px;line-height:16px;white-space:nowrap;color:#e01818;font-family:'Liberation Sans','DejaVu Sans',sans-serif;font-weight:bold;font-style:italic;left:360px;">PS</div>
<div style="position:absolute;left:478px;top:958px;width:151px;height:21px;background:#d4d0c8;border:1px solid;border-color:#d4d0c8 #404040 #404040 #808080;box-shadow:inset -1px -1px 0 #808080"></div>
<div style="position:absolute;top:960px;font-size:11.5px;line-height:16px;white-space:nowrap;color:#4a4a4a;font-family:'Liberation Sans','DejaVu Sans',sans-serif;letter-spacing:-1.016px;left:501px;">Reference picture group</div>
<svg style="left:481px;top:960px" width="18" height="16" viewBox="0 0 18 16"><rect x="1" y="2" width="9" height="7" fill="#d03030" stroke="#333" stroke-width="0.8"/><rect x="5" y="5" width="9" height="7" fill="#30b040" stroke="#333" stroke-width="0.8"/><rect x="9" y="8" width="8" height="6" fill="#3050c8" stroke="#333" stroke-width="0.8"/></svg>
<div style="position:absolute;left:634px;top:958px;width:125px;height:21px;background:#d4d0c8;border:1px solid;border-color:#d4d0c8 #404040 #404040 #808080;box-shadow:inset -1px -1px 0 #808080"></div>
<div style="position:absolute;top:960px;font-size:11.5px;line-height:16px;white-space:nowrap;color:#4a4a4a;font-family:'Liberation Sans','DejaVu Sans',sans-serif;letter-spacing:-1.047px;left:656px;">Measure templates</div>
<svg style="left:635px;top:958px" width="18" height="20" viewBox="0 0 18 20"><rect x="6.5" y="1" width="4" height="18" fill="#e8e000" stroke="#8a8400" stroke-width="0.6"/><rect x="0" y="5" width="18" height="3.4" fill="#e8e000" stroke="#555" stroke-width="0.6"/></svg>
<div style="position:absolute;left:762px;top:958px;width:56px;height:21px;background:#d4d0c8;border:1px solid;border-color:#d4d0c8 #404040 #404040 #808080;box-shadow:inset -1px -1px 0 #808080"></div>
<div style="position:absolute;top:960px;font-size:11.5px;line-height:16px;white-space:nowrap;color:#4a4a4a;font-family:'Liberation Sans','DejaVu Sans',sans-serif;letter-spacing:-1.040px;left:785px;">Units</div>
<svg style="left:765px;top:959px" width="17" height="18" viewBox="0 0 17 18"><path d="M3 2v14M8 1l-1 16" stroke="#2838b8" stroke-width="2.2"/><path d="M11 3c3 0 4 3 2 5s-1 5 2 6" fill="none" stroke="#c02020" stroke-width="2"/><path d="M1 8l6-4" stroke="#333" stroke-width="1.4"/></svg>
<div style="position:absolute;left:249px;top:990px;width:1302px;height:1px;background:#fff"></div>
<div style="position:absolute;top:992px;font-size:14.5px;line-height:18px;white-space:nowrap;color:#2a2a2a;font-family:'Liberation Sans','DejaVu Sans',sans-serif;letter-spacing:-0.413px;left:250px;">Press F1 for help.</div>
<div class="sunk1" style="position:absolute;left:884px;top:992px;width:157px;height:20px;"></div>
<div style="position:absolute;top:992px;font-size:14.5px;line-height:18px;white-space:nowrap;color:#2a2a2a;font-family:'Liberation Sans','DejaVu Sans',sans-serif;letter-spacing:-0.307px;left:888px;">DefaultImageDoc.wsp</div>
<div class="sunk1" style="position:absolute;left:1045px;top:992px;width:207px;height:20px;"></div>
<div style="position:absolute;top:992px;font-size:14.5px;line-height:18px;white-space:nowrap;color:#2a2a2a;font-family:'Liberation Sans','DejaVu Sans',sans-serif;letter-spacing:-0.148px;left:1049px;">&lt;Calibration group not active&gt;</div>
<div class="sunk1" style="position:absolute;left:1256px;top:992px;width:211px;height:20px;"></div>
<div class="sunk1" style="position:absolute;left:1470px;top:992px;width:20px;height:20px;"></div>
<div class="sunk1" style="position:absolute;left:1494px;top:992px;width:34px;height:20px;"></div>
<div class="sunk1" style="position:absolute;left:1532px;top:992px;width:18px;height:20px;"></div>
</div>
</body>
</html>
